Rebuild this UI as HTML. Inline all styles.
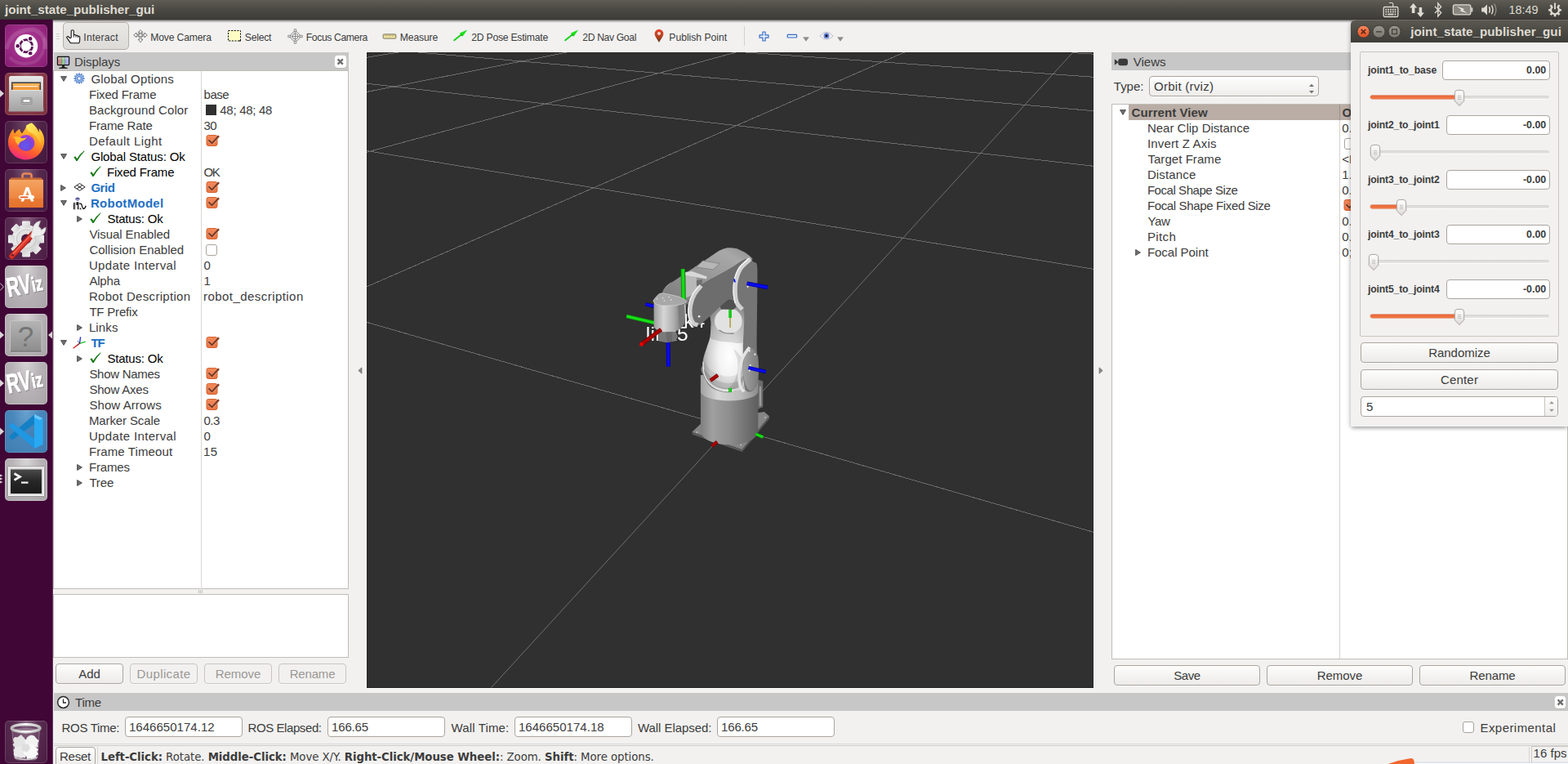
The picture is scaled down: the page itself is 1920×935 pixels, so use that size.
<!DOCTYPE html>
<html lang="en">
<head>
<meta charset="utf-8">
<title>joint_state_publisher_gui</title>
<style>
*{box-sizing:border-box;margin:0;padding:0}
html,body{width:1920px;height:935px;overflow:hidden}
body{position:relative;background:#f2f1f0;font-family:"Liberation Sans",sans-serif;font-size:15px;color:#3c3c3c;-webkit-font-smoothing:antialiased}
.abs{position:absolute}
.t{position:absolute;white-space:nowrap;line-height:1}
/* top panel */
#panel{position:absolute;left:0;top:0;width:1920px;height:24px;background:linear-gradient(#5e5c54 0%,#4b4a44 45%,#3e3d39 96%,#302f2c 100%);}
#panel .title{position:absolute;left:6px;top:3px;font-weight:bold;font-size:15.2px;color:#dfdbd2;line-height:18px;white-space:nowrap}
/* launcher */
#launcher{position:absolute;left:0;top:24px;width:65px;height:911px;background:#400636;border-right:1px solid #6a3863}
.tile{position:absolute;left:6px;width:52px;height:52px;border-radius:5px;overflow:hidden}
/* generic widgets */
.btn{position:absolute;height:24px;border:1px solid #aba59d;border-radius:4px;background:linear-gradient(#fdfdfc,#ecebe9);text-align:center;line-height:22px;font-size:15px;color:#3c3c3c;white-space:nowrap;box-shadow:0 1px 0 rgba(255,255,255,.6)}
.btn.dis{color:#9a9894;border-color:#c9c5c0;background:#f2f1f0}
.inp{position:absolute;height:24px;border:1px solid #aba59d;border-radius:4px;background:#fff;line-height:22px;font-size:15px;color:#3c3c3c;white-space:nowrap;padding-left:4px}
.hdr{position:absolute;height:22px;background:#c7c7c7}
.hdr .t{top:3px;font-size:15px;line-height:17px;color:#3c3c3c}
.closeb{position:absolute;width:13.400px;height:15px;border-radius:3.500px;background:#fefefe;box-shadow:0 0.600px 0.500px #aaa49c,0 0 0 0.400px #d9d9d9}
.tree{position:absolute;background:#fff;border:1px solid #c0bdb7}
.row{position:absolute;left:0;height:19px;line-height:19px;white-space:nowrap;font-size:15px;color:#3c3c3c}
.row.b{font-weight:bold}
.blue{color:#1e6fc4;font-weight:bold}
.blk{color:#000}
.cb{position:absolute;width:14px;height:14px;border:1px solid #a9a39b;border-radius:3px;background:#fff}
.cb.on{background:linear-gradient(#f39668,#ea7442);border-color:#c4633a}
</style>
</head>
<body>
<svg width="0" height="0" style="position:absolute;left:0;top:0" aria-hidden="true"><defs><linearGradient id="cbg" x1="0" y1="0" x2="0" y2="1"><stop offset="0" stop-color="#f28a5c"/><stop offset="1" stop-color="#ea7340"/></linearGradient></defs></svg>
<!-- ===== Unity top panel ===== -->
<div id="panel">
  <div class="title" style="letter-spacing:-0.032px;">joint_state_publisher_gui</div>
  <!-- keyboard indicator -->
  <svg class="abs" style="left:1692px;top:1px" width="22" height="22" viewBox="0 0 22 22">
    <path d="M9 2.5h3.2a1.5 1.5 0 0 1 1.5 1.5v3" fill="none" stroke="#dfdbd2" stroke-width="1.1"/>
    <rect x="2.2" y="7.5" width="17.6" height="12" rx="1.6" fill="none" stroke="#dfdbd2" stroke-width="1.3"/>
    <g fill="#dfdbd2"><rect x="4.4" y="9.8" width="1.8" height="1.8"/><rect x="7.2" y="9.8" width="1.8" height="1.8"/><rect x="10" y="9.8" width="1.8" height="1.8"/><rect x="12.8" y="9.8" width="1.8" height="1.8"/><rect x="15.6" y="9.8" width="1.8" height="1.8"/>
    <rect x="4.4" y="12.6" width="1.8" height="1.8"/><rect x="7.2" y="12.6" width="1.8" height="1.8"/><rect x="10" y="12.6" width="1.8" height="1.8"/><rect x="12.8" y="12.6" width="1.8" height="1.8"/><rect x="15.6" y="12.6" width="1.8" height="1.8"/>
    <rect x="4.4" y="15.6" width="1.8" height="1.8"/><rect x="7.2" y="15.6" width="7.4" height="1.8"/><rect x="15.6" y="15.6" width="1.8" height="1.8"/></g>
  </svg>
  <!-- network -->
  <svg class="abs" style="left:1725px;top:2px" width="20" height="20" viewBox="0 0 20 20">
    <path d="M5.6 2 L10.2 7.6 H7.4 V14 H3.8 V7.6 H1 Z" fill="#dfdbd2"/>
    <path d="M14.4 19 L9.8 13.4 H12.6 V7 H16.2 V13.4 H19 Z" fill="#dfdbd2"/>
  </svg>
  <!-- bluetooth -->
  <svg class="abs" style="left:1755px;top:2px" width="12" height="20" viewBox="0 0 12 20">
    <path d="M2 6 L9.6 13.6 L5.8 18 V2 L9.6 6.4 L2 14" fill="none" stroke="#dfdbd2" stroke-width="1.4" stroke-linejoin="miter"/>
  </svg>
  <!-- battery -->
  <svg class="abs" style="left:1778px;top:4px" width="26" height="16" viewBox="0 0 26 16">
    <rect x="1.400" y="1.900" width="21.400" height="12" rx="2.200" fill="#8a877f" stroke="#dfdbd2" stroke-width="1.300"/>
    <path d="M23.400 5.200 H24.400 Q25.300 5.200 25.300 6.100 V9.700 Q25.300 10.600 24.400 10.600 H23.400 Z" fill="#dfdbd2"/>
    <path d="M5.800 3.800 L15 7 L13 8.200 L19 12.200 L9.600 9.200 L11.800 7.900 Z" fill="#f0ede6"/>
  </svg>
  <!-- volume -->
  <svg class="abs" style="left:1813px;top:3px" width="22" height="18" viewBox="0 0 22 18">
    <path d="M1.2 6.6 H4 L8 2.6 V15.4 L4 11.4 H1.2 Z" fill="#dfdbd2"/>
    <path d="M10.4 5.4 Q12.4 9 10.4 12.6" fill="none" stroke="#dfdbd2" stroke-width="1.5"/>
    <path d="M13.4 3.6 Q16.6 9 13.4 14.4" fill="none" stroke="#dfdbd2" stroke-width="1.5"/>
    <path d="M16.6 1.6 Q21.2 9 16.6 16.4" fill="none" stroke="#8f8c84" stroke-width="1.4"/>
  </svg>
  <div class="t" style="left:1848px;top:4px;font-size:14.400px;line-height:16px;color:#dfdbd2;letter-spacing:-0.003px;margin-left:-0.5px;">18:49</div>
  <!-- power cog -->
  <svg class="abs" style="left:1895px;top:3px" width="18" height="18" viewBox="0 0 18 18">
    <g fill="none" stroke="#dfdbd2">
      <path d="M6.300 5.100 A5 5 0 1 0 11.700 5.100" stroke-width="2.300"/>
      <path d="M9 0.600 V8.200" stroke-width="1.900"/>
      <g stroke-width="2.600"><path d="M12.800 5 L14.600 3.400"/><path d="M5.200 5 L3.400 3.400"/><path d="M14.300 9.300 H16.900"/><path d="M3.700 9.300 H1.100"/><path d="M12.700 13.200 L14.500 15"/><path d="M5.300 13.200 L3.500 15"/><path d="M9 14.700 V17.300"/></g>
    </g>
  </svg>
</div>
<!-- ===== Unity launcher ===== -->
<div id="launcher">
  <!-- dash -->
  <div class="tile" style="top:6px;background:radial-gradient(circle at 50% 45%,#b8489f 0%,#9a2a84 55%,#861c70 100%);box-shadow:inset 0 0 0 1px rgba(255,255,255,.12)">
    <svg width="52" height="52" viewBox="0 0 52 52">
      <path d="M2 30 Q8 6 34 6 Q50 10 50 30" fill="none" stroke="rgba(255,255,255,.13)" stroke-width="5"/>
      <path d="M6 40 Q16 52 36 46 Q50 38 48 16" fill="none" stroke="rgba(255,255,255,.10)" stroke-width="4"/>
      <circle cx="26" cy="26.300" r="14.200" fill="#fff"/>
      <circle cx="26" cy="26.300" r="7.600" fill="none" stroke="#5e1455" stroke-width="2.800"/>
      <path d="M23.75 22.40 L21.00 17.64" stroke="#fff" stroke-width="1.300"/>
      <path d="M30.50 26.30 L36.00 26.30" stroke="#fff" stroke-width="1.300"/>
      <path d="M23.75 30.20 L21.00 34.96" stroke="#fff" stroke-width="1.300"/>
      <circle cx="15.70" cy="26.30" r="3.400" fill="#fff"/>
      <circle cx="15.70" cy="26.30" r="2.300" fill="#5e1455"/>
      <circle cx="31.15" cy="17.38" r="3.400" fill="#fff"/>
      <circle cx="31.15" cy="17.38" r="2.300" fill="#5e1455"/>
      <circle cx="31.15" cy="35.22" r="3.400" fill="#fff"/>
      <circle cx="31.15" cy="35.22" r="2.300" fill="#5e1455"/>
    </svg>
  </div>
  <!-- files -->
  <div class="tile" style="top:65px;background:radial-gradient(ellipse at 50% 0%,#a3616a 0%,#8a3c49 45%,#7d303e 100%);box-shadow:inset 0 0 0 1px rgba(255,255,255,.14)">
    <svg width="52" height="52" viewBox="0 0 52 52">
      <defs><linearGradient id="fc1" x1="0" y1="0" x2="0" y2="1"><stop offset="0" stop-color="#e9e9e9"/><stop offset="1" stop-color="#a9a9a9"/></linearGradient>
      <linearGradient id="fc2" x1="0" y1="0" x2="0" y2="1"><stop offset="0" stop-color="#c9c9c9"/><stop offset="1" stop-color="#a2a2a2"/></linearGradient></defs>
      <path d="M5 6.500 Q5 4 7.500 4 H44.500 Q47 4 47 6.500 V46.500 H5 Z" fill="url(#fc1)"/>
      <rect x="8" y="11.500" width="36" height="11" fill="#3a3a3a"/>
      <rect x="9.500" y="13" width="33" height="8" fill="#f39a3c"/>
      <rect x="9.500" y="13" width="33" height="2.200" fill="#f7b65a"/>
      <rect x="10.500" y="16" width="30" height="1.300" fill="#fff6e0"/>
      <path d="M6.500 21.500 H45.500 L47.500 47.500 H4.500 Z" fill="url(#fc2)"/>
      <path d="M7.500 21.500 H44.500" stroke="#e4e4e4" stroke-width="1"/>
      <rect x="20" y="30.500" width="13" height="8" rx="1.500" fill="#b5b5b5" stroke="#8d8d8d" stroke-width="0.800"/>
      <rect x="22" y="32.300" width="9" height="4" fill="#f4f4f4" stroke="#6a6a6a" stroke-width="0.700"/>
    </svg>
  </div>
  <!-- firefox -->
  <div class="tile" style="top:124px;background:radial-gradient(ellipse at 50% 0%,#6d4566 0%,#4f2348 50%,#45183e 100%);box-shadow:inset 0 0 0 1px rgba(255,255,255,.14)">
    <svg width="52" height="52" viewBox="0 0 52 52">
      <defs>
        <linearGradient id="ff1" x1="0.700" y1="0" x2="0.250" y2="1"><stop offset="0" stop-color="#ffe14a"/><stop offset="0.350" stop-color="#ffa426"/><stop offset="0.700" stop-color="#ff5a2e"/><stop offset="1" stop-color="#f0218f"/></linearGradient>
        <radialGradient id="ff2" cx="0.450" cy="0.650" r="0.650"><stop offset="0" stop-color="#5c5bf0"/><stop offset="0.600" stop-color="#7a43d8"/><stop offset="1" stop-color="#b23bd0"/></radialGradient>
        <linearGradient id="ff3" x1="0" y1="0" x2="1" y2="1"><stop offset="0" stop-color="#fff36b"/><stop offset="1" stop-color="#ffb52e"/></linearGradient>
      </defs>
      <path d="M33 2.500 C37 6 40 10 41.500 14 C42 12 42 10.500 41.500 9 C47 14 49 21 48 28 C46.500 39 37 47.500 26 47.500 C13.500 47.500 4 38 4 26.500 C4 19 7 13.500 10.500 9.500 C10.500 12 11 14 12 15.500 C13.500 13 15.500 11 18 10 C18.500 12 19.500 14 21 15.500 C23 12 26 9.500 26 6 C28 4 31 3 33 2.500 Z" fill="url(#ff1)"/>
      <path d="M33 2.500 C37 6 40 10 41.500 14 C44 19 45 24 43.500 29 C42 22 38 17 32 14 C28 12 26 9.500 26 6 C28 4 31 3 33 2.500 Z" fill="url(#ff3)"/>
      <ellipse cx="26" cy="27" rx="10.500" ry="10" fill="url(#ff2)"/>
      <path d="M9.500 20 C13 18.500 17 19 20.500 21 C23 21.500 25 21 26.500 20 C25.500 22.500 23.500 24 21 24.500 C18.500 25.500 17 27.500 17 30 C14 27.500 12.500 24.500 12.500 22 C11.500 21 10.500 20.500 9.500 20 Z" fill="#ffbd2f"/>
      <path d="M28.500 15 C32 15.500 35 18 36 21 C34.500 20 33 19.500 31.500 19.500 C31 17.500 30 16 28.500 15 Z" fill="#ff8a2a" opacity=".9"/>
    </svg>
  </div>
  <!-- software center -->
  <div class="tile" style="top:183px;background:radial-gradient(ellipse at 50% 0%,#7a5674 0%,#55294e 45%,#481a41 100%);box-shadow:inset 0 0 0 1px rgba(255,255,255,.14)">
    <svg width="52" height="52" viewBox="0 0 52 52">
      <defs><linearGradient id="sw1" x1="0" y1="0" x2="0" y2="1"><stop offset="0" stop-color="#f4a463"/><stop offset="0.550" stop-color="#ef8a45"/><stop offset="1" stop-color="#e6742f"/></linearGradient></defs>
      <path d="M21.500 17 V8 Q21.500 5.500 24 5.500 H30 Q32.500 5.500 32.500 8 V17" fill="none" stroke="#e98856" stroke-width="2.600"/>
      <path d="M5 13.500 L7.500 10.500 H44.500 L47 13.500 Z" fill="#c86a35"/>
      <rect x="5" y="13" width="42" height="34" fill="url(#sw1)"/>
      <rect x="5" y="36" width="42" height="11" fill="#e56f2a" opacity=".5"/>
      <path d="M25.800 22 H29.200 L35.500 39.500 H32 L27.500 26.500 L23 39.500 H19.500 Z" fill="#fff"/>
      <rect x="17" y="32" width="19" height="4.600" rx="2.300" fill="#fff"/>
      <rect x="18.500" y="33.400" width="10" height="1.800" rx="0.900" fill="#e8521c"/>
    </svg>
  </div>
  <!-- system settings -->
  <div class="tile" style="top:242px;background:radial-gradient(ellipse at 50% 0%,#86607f 0%,#5a2c52 45%,#4b1c43 100%);box-shadow:inset 0 0 0 1px rgba(255,255,255,.14)">
    <svg width="52" height="52" viewBox="0 0 52 52">
      <defs><linearGradient id="st1" x1="0" y1="0" x2="1" y2="1"><stop offset="0" stop-color="#f4f4f4"/><stop offset="1" stop-color="#cfcfcf"/></linearGradient></defs>
      <g transform="translate(26 26.500)">
        <g fill="url(#st1)">
          <circle r="17.500"/>
          <rect x="-5" y="-22" width="10" height="8" rx="1.200" transform="rotate(0)"/>
          <rect x="-5" y="-22" width="10" height="8" rx="1.200" transform="rotate(45)"/>
          <rect x="-5" y="-22" width="10" height="8" rx="1.200" transform="rotate(90)"/>
          <rect x="-5" y="-22" width="10" height="8" rx="1.200" transform="rotate(135)"/>
          <rect x="-5" y="-22" width="10" height="8" rx="1.200" transform="rotate(180)"/>
          <rect x="-5" y="-22" width="10" height="8" rx="1.200" transform="rotate(225)"/>
          <rect x="-5" y="-22" width="10" height="8" rx="1.200" transform="rotate(270)"/>
          <rect x="-5" y="-22" width="10" height="8" rx="1.200" transform="rotate(315)"/>
        </g>
        <circle r="11.500" fill="#e2e2e2" stroke="#c9c9c9" stroke-width="1.200"/>
        <circle r="6" fill="#4b1c43"/>
      </g>
      <path d="M8.500 47.500 L34 20.500" stroke="#b01f18" stroke-width="7" stroke-linecap="round"/>
      <path d="M8.500 47.500 L34 20.500" stroke="#e0382c" stroke-width="4.600" stroke-linecap="round"/>
      <path d="M9.500 45 L33 20" stroke="#f07a6a" stroke-width="1.200" stroke-linecap="round" opacity=".8"/>
      <circle cx="9.500" cy="46.300" r="1.500" fill="#6a1d2e"/>
      <path d="M31.500 23.500 L35.500 10 Q38 5 43.500 4.500 L41 11.500 L44.500 15.500 L50 12 Q50.500 18 46 21.500 Q42 24 37.500 23 L34.500 26.500 Z" fill="#ededed" stroke="#bdbdbd" stroke-width="0.700"/>
    </svg>
  </div>
  <!-- rviz -->
  <div class="tile" style="top:301px;background:radial-gradient(ellipse at 50% 0%,#d6d3d5 0%,#b7b3b6 45%,#a9a4a8 100%);box-shadow:inset 0 0 0 1px rgba(255,255,255,.25)">
    <svg width="52" height="52" viewBox="0 0 52 52">
      <defs><filter id="fNoL" x="-10%" y="-10%" width="120%" height="120%"><feOffset dx="0" dy="0"/></filter></defs>
      <g font-family="'Liberation Sans',sans-serif" font-weight="bold" filter="url(#fNoL)">
        <g transform="translate(5.500 39.500) rotate(-11) scale(0.660 1)"><text x="0" y="0" font-size="33" fill="#8a8689" stroke="#8a8689" stroke-width="0.800">RV</text></g>
        <g transform="translate(35.300 33.300) rotate(-11) scale(0.700 1)"><text x="0" y="0" font-size="25" fill="#8a8689" stroke="#8a8689" stroke-width="0.800">iz</text></g>
        <g transform="translate(4.500 38.500) rotate(-11) scale(0.660 1)"><text x="0" y="0" font-size="33" fill="#ffffff" stroke="#ffffff" stroke-width="0.800">RV</text></g>
        <g transform="translate(34.300 32.300) rotate(-11) scale(0.700 1)"><text x="0" y="0" font-size="25" fill="#ffffff" stroke="#ffffff" stroke-width="0.800">iz</text></g>
      </g>
    </svg>
  </div>
  <!-- help -->
  <div class="tile" style="top:360px;background:radial-gradient(ellipse at 50% 0%,#d6d3d5 0%,#b7b3b6 45%,#a9a4a8 100%);box-shadow:inset 0 0 0 1px rgba(255,255,255,.25)">
    <svg width="52" height="52" viewBox="0 0 52 52">
      <defs><linearGradient id="hp1" x1="0" y1="0" x2="0" y2="1"><stop offset="0" stop-color="#b4b4b4"/><stop offset="1" stop-color="#8c8c8c"/></linearGradient></defs>
      <rect x="6.500" y="8.500" width="38.500" height="38.500" rx="2" fill="url(#hp1)" stroke="#c9c9c9" stroke-width="0.800"/>
      <path d="M6.500 46 H45" stroke="#6f6f6f" stroke-width="1.200"/>
      <text x="25.600" y="40" font-family="'Liberation Sans',sans-serif" font-size="35" fill="#747474" text-anchor="middle">?</text>
    </svg>
  </div>
  <!-- rviz 2 -->
  <div class="tile" style="top:419px;background:radial-gradient(ellipse at 50% 0%,#d6d3d5 0%,#b7b3b6 45%,#a9a4a8 100%);box-shadow:inset 0 0 0 1px rgba(255,255,255,.25)">
    <svg width="52" height="52" viewBox="0 0 52 52">
      <g font-family="'Liberation Sans',sans-serif" font-weight="bold" filter="url(#fNoL)">
        <g transform="translate(5.500 39.500) rotate(-11) scale(0.660 1)"><text x="0" y="0" font-size="33" fill="#8a8689" stroke="#8a8689" stroke-width="0.800">RV</text></g>
        <g transform="translate(35.300 33.300) rotate(-11) scale(0.700 1)"><text x="0" y="0" font-size="25" fill="#8a8689" stroke="#8a8689" stroke-width="0.800">iz</text></g>
        <g transform="translate(4.500 38.500) rotate(-11) scale(0.660 1)"><text x="0" y="0" font-size="33" fill="#ffffff" stroke="#ffffff" stroke-width="0.800">RV</text></g>
        <g transform="translate(34.300 32.300) rotate(-11) scale(0.700 1)"><text x="0" y="0" font-size="25" fill="#ffffff" stroke="#ffffff" stroke-width="0.800">iz</text></g>
      </g>
    </svg>
  </div>
  <!-- vscode -->
  <div class="tile" style="top:478px;background:radial-gradient(ellipse at 50% 0%,#6aa2cf 0%,#4a87bb 45%,#3f7cb0 100%);box-shadow:inset 0 0 0 1px rgba(255,255,255,.14)">
    <svg width="52" height="52" viewBox="0 0 52 52">
      <path d="M36 5 L46.500 10 V42 L36 47 Z" fill="#29a9f2"/>
      <path d="M36 5 L46.500 10 L42.500 12 L36 9 Z" fill="#6cc8fb"/>
      <path d="M36 5.500 L36 17 L9 36.500 L5.500 33.500 Q4.600 32.500 5.500 31.500 Z" fill="#1480c6"/>
      <path d="M36 46.500 L36 35 L9 15.500 L5.500 18.500 Q4.600 19.500 5.500 20.500 Z" fill="#1f97e3"/>
      <path d="M36 17 V35 L24 26 Z" fill="#3f7cb0" opacity=".55"/>
    </svg>
  </div>
  <!-- terminal -->
  <div class="tile" style="top:537px;background:radial-gradient(ellipse at 50% 0%,#d9d6d8 0%,#b9b5b8 45%,#aaa5a9 100%);box-shadow:inset 0 0 0 1px rgba(255,255,255,.25)">
    <svg width="52" height="52" viewBox="0 0 52 52">
      <defs><linearGradient id="tm1" x1="0" y1="0" x2="0" y2="1"><stop offset="0" stop-color="#4a4a4a"/><stop offset="0.500" stop-color="#262626"/><stop offset="1" stop-color="#1a1a1a"/></linearGradient></defs>
      <rect x="3.500" y="10" width="45" height="36.500" rx="1.500" fill="#d9d9d9" stroke="#8a8a8a" stroke-width="0.800"/>
      <rect x="4.500" y="11" width="43" height="34.500" fill="none" stroke="#fff" stroke-width="1"/>
      <rect x="7" y="13.500" width="38" height="29.500" fill="url(#tm1)"/>
      <path d="M11.500 18.500 L18.500 22.500 L11.500 26.500" fill="none" stroke="#f2f2f2" stroke-width="2.600"/>
      <rect x="20" y="28.500" width="8.500" height="2.200" fill="#f2f2f2"/>
    </svg>
  </div>
  <!-- trash -->
  <div class="tile" style="top:858px;background:radial-gradient(ellipse at 50% 0%,#8a6a84 0%,#5a2f53 38%,#4a1c43 100%);box-shadow:inset 0 0 0 1px rgba(255,255,255,.16)">
    <svg width="52" height="52" viewBox="0 0 52 52">
      <defs><linearGradient id="tr1" x1="0" y1="0" x2="1" y2="0"><stop offset="0" stop-color="#bdbdbd"/><stop offset="0.500" stop-color="#ffffff"/><stop offset="1" stop-color="#bdbdbd"/></linearGradient></defs>
      <path d="M8.600 10 L11.700 45 Q12.200 47.600 16 48 H35.500 Q39.300 47.600 39.800 45 L42.600 10 Z" fill="rgba(255,255,255,.13)" stroke="rgba(255,255,255,.38)" stroke-width="0.800"/>
      <path d="M27.4 27.0 L25.4 29.0 L25.4 31.4 L23.0 32.2 L22.0 34.7 L19.6 34.9 L17.1 36.4 L15.0 34.8 L12.3 34.2 L11.6 31.5 L9.4 29.7 L11.5 27.0 L10.2 24.6 L10.3 21.7 L12.4 19.9 L15.4 20.2 L17.3 18.9 L19.9 16.9 L22.0 19.4 L23.8 20.9 L24.8 23.0 L25.0 25.1 Z" fill="#e4e4e4"/>
      <path d="M40.5 27.0 L40.2 29.3 L40.6 32.3 L37.3 32.7 L36.3 35.6 L33.9 37.1 L31.1 36.7 L28.7 35.5 L26.9 33.6 L25.5 31.6 L24.2 29.5 L25.4 27.0 L23.1 24.2 L26.1 22.8 L27.0 20.5 L29.0 19.1 L31.2 17.7 L33.8 17.8 L36.2 18.7 L37.8 20.8 L39.3 22.5 L41.7 24.2 Z" fill="#f2f2f2"/>
      <path d="M27.5 38.5 L26.9 40.8 L25.7 42.8 L25.1 45.5 L22.1 45.3 L20.0 45.7 L18.0 45.4 L16.2 44.6 L13.6 44.7 L11.5 43.3 L10.6 41.0 L11.0 38.5 L10.4 36.0 L11.8 33.9 L14.1 32.9 L15.6 31.0 L18.0 31.4 L20.0 31.2 L22.2 31.6 L24.5 32.2 L25.6 34.3 L26.5 36.3 Z" fill="#eaeaea"/>
      <path d="M39.2 38.0 L41.3 40.9 L38.7 42.6 L37.5 44.9 L35.4 46.6 L32.8 47.2 L30.3 46.1 L27.2 47.4 L26.4 43.9 L25.0 42.2 L23.1 40.5 L22.4 38.0 L22.3 35.3 L24.5 33.5 L25.4 31.0 L28.6 31.6 L30.1 28.6 L32.9 28.6 L35.4 29.5 L36.4 32.3 L38.9 33.3 L41.0 35.2 Z" fill="#f8f8f8"/>
      <path d="M31.1 33.0 L29.9 35.1 L28.6 36.9 L26.8 38.7 L24.5 37.5 L21.9 37.5 L20.7 35.3 L20.7 33.0 L20.8 30.7 L21.9 28.4 L24.5 28.7 L26.4 28.9 L28.9 28.8 L29.5 31.1 Z" fill="#dedede"/>
      <path d="M12 44 Q25.500 49.500 39.500 44 L39.300 46 Q25.500 50.500 12.200 46 Z" fill="#cfcfcf"/>
      <ellipse cx="25.600" cy="9.200" rx="17.400" ry="4.600" fill="none" stroke="url(#tr1)" stroke-width="3.400"/>
      <ellipse cx="25.600" cy="10.400" rx="17" ry="4.600" fill="none" stroke="#a9a9a9" stroke-width="0.800" opacity=".7"/>
    </svg>
  </div>
  <!-- running / active pips -->
  <svg class="abs" style="left:0;top:0" width="65" height="911" viewBox="0 0 65 911">
    <path d="M0 86 L5 90.500 L0 95 Z" fill="#d9d3d7"/>
    <path d="M0.200 322.500 L4.400 327 L0.200 331.500" fill="none" stroke="#d9d3d7" stroke-width="1"/>
    <path d="M0 381.500 L5 386 L0 390.500 Z" fill="#d9d3d7"/>
    <path d="M64 381.500 L59 386 L64 390.500 Z" fill="#d9d3d7"/>
    <path d="M0 440.500 L5 445 L0 449.500 Z" fill="#d9d3d7"/>
    <path d="M0 499.500 L5 504 L0 508.500 Z" fill="#d9d3d7"/>
    <path d="M0 556.600 L3.500 558 L0 559.400 Z M0 560.600 L3.500 562 L0 563.400 Z M0 564.600 L3.500 566 L0 567.400 Z" fill="#d9d3d7"/>
  </svg>
</div>
<!-- ===== RViz toolbar ===== -->
<div class="abs" style="left:65px;top:24px;width:1855px;height:4px;background:linear-gradient(rgba(40,38,34,.75),rgba(60,58,54,.25) 55%,rgba(242,241,240,0))"></div>
<div id="toolbar" class="abs" style="left:65px;top:24px;width:1590px;height:40px;font-size:12.2px;color:#3c3c3c">
  <!-- grip -->
  <div class="abs" style="left:4px;top:17px;width:4px;height:1px;background:#cfccc7;box-shadow:0 3px 0 #cfccc7,0 6px 0 #cfccc7"></div>
  <!-- Interact (checked) -->
  <div class="abs" style="left:12px;top:3px;width:81px;height:34px;border:1px solid #b4afa8;border-radius:5px;background:linear-gradient(#ebe9e6,#e2e0dd 60%,#dddbd8)"></div>
  <svg class="abs" style="left:16px;top:12px" width="18" height="18" viewBox="0 0 18 18">
    <path d="M6.200 10 V2.100 Q6.200 0.700 7.700 0.700 Q9.300 0.700 9.300 2.100 V6.700 Q10.400 6.200 11.400 6.700 Q12 7.100 12 7.600 Q12.900 7 13.800 7.400 Q14.500 7.800 14.500 8.400 Q15.300 8 16.100 8.400 Q16.700 8.900 16.700 9.900 V13 Q16.700 15.200 15.700 16.700 H5.500 Q4 14.800 2.700 12.900 L0.900 10.300 Q0.400 9.100 1.400 8.700 Q2.600 8.400 3.400 9.300 L4.600 10.700 Z" fill="#fff" stroke="#111" stroke-width="1.100" stroke-linejoin="round"/>
    <path d="M9.300 6.700 V9.600 M12 7.600 V9.800 M14.500 8.400 V10.200" stroke="#111" stroke-width="0.900" fill="none"/>
  </svg>
  <div class="t" style="left:37.8px;top:14.600px;line-height:15px;letter-spacing:0.233px;margin-left:-0.5px;">Interact</div>
  <!-- Move Camera -->
  <svg class="abs" style="left:98px;top:12px" width="18" height="17" viewBox="0 0 18 17">
    <g fill="#f6f6f6" stroke="#4a4a4a" stroke-width="0.700" stroke-linejoin="round">
      <path d="M9 0.600 L11.800 3.600 H10 V6 H14 V4.200 L17.300 7 L14 9.800 V8 H10 V12.200 H11.800 L9 15.800 L6.200 12.200 H8 V8 H4 V9.800 L0.700 7 L4 4.200 V6 H8 V3.600 H6.200 Z"/>
    </g>
    <ellipse cx="9" cy="7" rx="3.400" ry="2" fill="none" stroke="#666" stroke-width="0.700"/>
  </svg>
  <div class="t" style="left:119.8px;top:14.600px;line-height:15px;letter-spacing:-0.187px;margin-left:-0.5px;">Move Camera</div>
  <!-- Select -->
  <svg class="abs" style="left:213px;top:12px" width="18" height="16" viewBox="0 0 18 16">
    <rect x="1.500" y="1.500" width="15" height="12.500" fill="#fdfcc4" stroke="#111" stroke-width="1" stroke-dasharray="2.200 1.400"/>
    <path d="M16.800 12 V14.500 H14.300 Z" fill="#111"/>
  </svg>
  <div class="t" style="left:234.8px;top:14.600px;line-height:15px;letter-spacing:-0.248px;">Select</div>
  <!-- Focus Camera -->
  <svg class="abs" style="left:287px;top:11px" width="19" height="19" viewBox="0 0 19 19">
    <g fill="#f0f0f0" stroke="#707070" stroke-width="0.750">
      <path d="M8.300 0.800 H10.700 V4 H8.300 Z M8.300 15 H10.700 V18.200 H8.300 Z M0.800 8.300 H4 V10.700 H0.800 Z M15 8.300 H18.200 V10.700 H15 Z"/>
      <circle cx="9.500" cy="9.500" r="5.600"/>
    </g>
    <circle cx="9.500" cy="9.500" r="3.400" fill="#f4f4f4" stroke="#777" stroke-width="0.800"/>
    <path d="M9.500 5 V14 M5 9.500 H14" stroke="#777" stroke-width="0.800"/>
  </svg>
  <div class="t" style="left:310.3px;top:14.600px;line-height:15px;letter-spacing:-0.395px;margin-left:-0.5px;">Focus Camera</div>
  <!-- Measure -->
  <svg class="abs" style="left:403px;top:16.500px" width="18" height="8" viewBox="0 0 18 8">
    <rect x="1.200" y="0.900" width="15.600" height="5.200" rx="0.800" fill="#efe2a0" stroke="#7c7559" stroke-width="1"/>
    <path d="M4 1.500 V3.400 M6.200 1.500 V3 M8.400 1.500 V3.400 M10.600 1.500 V3 M12.800 1.500 V3.400 M15 1.500 V3" stroke="#7c7559" stroke-width="0.700"/>
  </svg>
  <div class="t" style="left:425.3px;top:14.600px;line-height:15px;letter-spacing:-0.174px;margin-left:-0.5px;">Measure</div>
  <!-- 2D Pose Estimate -->
  <svg class="abs" style="left:490px;top:12px" width="18" height="15" viewBox="0 0 18 15">
    <path d="M1.200 13.300 L10 6.300" stroke="#19d219" stroke-width="2" stroke-linecap="round"/>
    <path d="M17.200 0.400 L11.600 8.400 L8 4.600 Z" fill="#14e314"/>
    <path d="M8 4.600 L11.600 8.400 L9.700 7.300 Z" fill="#0b6e0b"/>
  </svg>
  <div class="t" style="left:512.3px;top:14.600px;line-height:15px;letter-spacing:-0.245px;">2D Pose Estimate</div>
  <!-- 2D Nav Goal -->
  <svg class="abs" style="left:626px;top:12px" width="18" height="15" viewBox="0 0 18 15">
    <path d="M1.200 13.300 L10 6.300" stroke="#19d219" stroke-width="2" stroke-linecap="round"/>
    <path d="M17.200 0.400 L11.600 8.400 L8 4.600 Z" fill="#14e314"/>
    <path d="M8 4.600 L11.600 8.400 L9.700 7.300 Z" fill="#0b6e0b"/>
  </svg>
  <div class="t" style="left:648.3px;top:14.600px;line-height:15px;letter-spacing:-0.367px;">2D Nav Goal</div>
  <!-- Publish Point -->
  <svg class="abs" style="left:735px;top:11px" width="14" height="18" viewBox="0 0 14 18">
    <defs><linearGradient id="pp1" x1="0" y1="0" x2="0" y2="1"><stop offset="0" stop-color="#e8442a"/><stop offset="0.550" stop-color="#b5421f"/><stop offset="1" stop-color="#5a3317"/></linearGradient></defs>
    <path d="M7 17 C5.500 13.500 1.600 9.800 1.600 6.200 A5.400 5.400 0 0 1 12.400 6.200 C12.400 9.800 8.500 13.500 7 17 Z" fill="url(#pp1)"/>
    <circle cx="7" cy="6" r="2" fill="#f6ddd6"/>
  </svg>
  <div class="t" style="left:754.8px;top:14.600px;line-height:15px;letter-spacing:-0.021px;margin-left:-0.5px;">Publish Point</div>
  <div class="abs" style="left:846px;top:8px;width:1px;height:24px;background:#d3d0cb"></div>
  <!-- plus -->
  <svg class="abs" style="left:863.500px;top:13.500px" width="13" height="13" viewBox="0 0 13 13">
    <path d="M4.900 1 H8.100 V4.900 H12 V8.100 H8.100 V12 H4.900 V8.100 H1 V4.900 H4.900 Z" fill="#e4edfb" stroke="#3d6fc0" stroke-width="1.200" stroke-linejoin="round"/>
  </svg>
  <!-- minus -->
  <svg class="abs" style="left:898px;top:17px" width="14" height="7" viewBox="0 0 14 7">
    <rect x="1.200" y="1.400" width="11.400" height="3.600" rx="0.800" fill="#e4edfb" stroke="#3d6fc0" stroke-width="1.200"/>
  </svg>
  <svg class="abs" style="left:918px;top:21px" width="8" height="6" viewBox="0 0 8 6"><path d="M0.700 0.700 H7.300 L4 5.200 Z" fill="#8e8e8e" stroke="#777" stroke-width="0.500"/></svg>
  <!-- eye -->
  <svg class="abs" style="left:938px;top:14px" width="18" height="12" viewBox="0 0 18 12">
    <path d="M0.800 6 Q9 -3.400 17.200 6 Q9 14.600 0.800 6 Z" fill="#f2f2f6" stroke="#b9b9c4" stroke-width="0.900"/>
    <circle cx="9" cy="5.800" r="3.500" fill="#6a86d2"/>
    <circle cx="9" cy="5.800" r="1.500" fill="#0b0b20"/>
  </svg>
  <svg class="abs" style="left:960px;top:21px" width="8" height="6" viewBox="0 0 8 6"><path d="M0.700 0.700 H7.300 L4 5.200 Z" fill="#8e8e8e" stroke="#777" stroke-width="0.500"/></svg>
</div>
<!-- ===== Displays panel ===== -->
<div class="hdr" style="left:66px;top:64px;width:361px;height:22px">
  <svg class="abs" style="left:3px;top:4px" width="17" height="17" viewBox="0 0 17 17"><rect x="0.800" y="0.800" width="15.400" height="11.400" rx="1.400" fill="#111"/><rect x="2" y="2" width="4.400" height="9" fill="#c98a8a"/><rect x="6.400" y="2" width="4.300" height="9" fill="#8fca8f"/><rect x="10.700" y="2" width="4.300" height="9" fill="#ababf0"/><rect x="2" y="2" width="13" height="3" fill="#fff" opacity=".18"/><rect x="7" y="12.200" width="3" height="2" fill="#111"/><path d="M3.500 15.400 Q8.500 13.400 13.500 15.400 Z" fill="#111" stroke="#111" stroke-width="0.800"/></svg>
  <div class="t" style="left:25.500px;top:3px;letter-spacing:-0.055px;margin-left:-0.5px;">Displays</div>
  <div class="closeb" style="left:344.200px;top:3.700px"><svg width="13.4" height="15" viewBox="0 0 13.4 15" style="position:absolute;left:0;top:0"><path d="M3.600 4.400 L9.800 10.600 M9.800 4.400 L3.600 10.600" stroke="#6c6c6c" stroke-width="2.300" stroke-linecap="butt"/></svg></div>
</div>
<div class="tree" style="left:65px;top:86px;width:362px;height:635px">
  <div class="abs" style="left:180px;top:0;width:1px;height:634px;background:#d9d8d5"></div>
  <svg class="abs" style="left:8.4px;top:5.6px" width="8" height="7" viewBox="0 0 8 7"><path d="M0.500 0.600 H7.500 L4 6.400 Z" fill="#707070" stroke="#3a3a3a" stroke-width="0.800" stroke-linejoin="round"/></svg><svg class="abs" style="left:23.5px;top:1.5px" width="14" height="14" viewBox="0 0 14 14"><g transform="translate(7 7)"><g stroke="#4a7ccb" stroke-width="2" stroke-linecap="butt"><path d="M4.20 0.00 L6.50 0.00"/><path d="M3.64 2.10 L5.63 3.25"/><path d="M2.10 3.64 L3.25 5.63"/><path d="M0.00 4.20 L0.00 6.50"/><path d="M-2.10 3.64 L-3.25 5.63"/><path d="M-3.64 2.10 L-5.63 3.25"/><path d="M-4.20 0.00 L-6.50 0.00"/><path d="M-3.64 -2.10 L-5.63 -3.25"/><path d="M-2.10 -3.64 L-3.25 -5.63"/><path d="M-0.00 -4.20 L-0.00 -6.50"/><path d="M2.10 -3.64 L3.25 -5.63"/><path d="M3.64 -2.10 L5.63 -3.25"/></g><g stroke="#b4caec" stroke-width="0.900"><path d="M4.00 0.00 L5.80 0.00"/><path d="M3.46 2.00 L5.02 2.90"/><path d="M2.00 3.46 L2.90 5.02"/><path d="M0.00 4.00 L0.00 5.80"/><path d="M-2.00 3.46 L-2.90 5.02"/><path d="M-3.46 2.00 L-5.02 2.90"/><path d="M-4.00 0.00 L-5.80 0.00"/><path d="M-3.46 -2.00 L-5.02 -2.90"/><path d="M-2.00 -3.46 L-2.90 -5.02"/><path d="M-0.00 -4.00 L-0.00 -5.80"/><path d="M2.00 -3.46 L2.90 -5.02"/><path d="M3.46 -2.00 L5.02 -2.90"/></g><circle r="4.600" fill="#a9c3e8" stroke="#3f73c4" stroke-width="0.800"/><circle r="2.600" fill="#b9cfef" stroke="#4a7dcc" stroke-width="0.900"/><circle r="1.100" fill="#ffffff"/></g></svg><div class="row" style="left:45.4px;top:0px;letter-spacing:0.167px;">Global Options</div>
  <div class="row" style="left:43.4px;top:19px;letter-spacing:-0.155px;margin-left:-0.5px;">Fixed Frame</div><div class="row" style="left:183.5px;top:19px;letter-spacing:-0.463px;">base</div>
  <div class="row" style="left:43.4px;top:38px;letter-spacing:0.088px;margin-left:-0.5px;">Background Color</div><div class="abs" style="left:186px;top:41px;width:13px;height:13px;background:#303030"></div><div class="row" style="left:203.3px;top:38px;letter-spacing:-0.288px;">48; 48; 48</div>
  <div class="row" style="left:43.4px;top:57px;letter-spacing:-0.140px;margin-left:-0.5px;">Frame Rate</div><div class="row" style="left:183.5px;top:57px;letter-spacing:-0.545px;">30</div>
  <div class="row" style="left:43.4px;top:76px;letter-spacing:0.419px;margin-left:-0.5px;">Default Light</div><svg class="abs" style="left:185.5px;top:76.5px" width="17" height="16" viewBox="0 0 17 16"><rect x="1" y="1.500" width="13" height="13" rx="2.200" fill="url(#cbg)" stroke="#d3612f" stroke-width="1"/><path d="M3.300 7.300 L7.500 11.400 L16 2.300" fill="none" stroke="#f6b391" stroke-width="3.400" stroke-linejoin="round" opacity=".75"/><path d="M3.400 7.300 L7.500 11.300 L16 2.300" fill="none" stroke="#7a3a24" stroke-width="2.200" stroke-linejoin="miter"/></svg>
  <svg class="abs" style="left:8.4px;top:100.6px" width="8" height="7" viewBox="0 0 8 7"><path d="M0.500 0.600 H7.500 L4 6.400 Z" fill="#707070" stroke="#3a3a3a" stroke-width="0.800" stroke-linejoin="round"/></svg><svg class="abs" style="left:24.1px;top:97px" width="14" height="14" viewBox="0 0 14 14"><path d="M0.300 8.500 L2.300 7.200 Q3.500 8.600 4.200 10.200 Q8 4 13.100 0.200 L13.500 0.900 Q8.600 6 4.700 13.100 H3.200 Q2.200 10.600 0.300 8.500 Z" fill="#1a7a1a"/></svg><div class="row blk" style="left:45.4px;top:95px;letter-spacing:-0.135px;">Global Status: Ok</div>
  <svg class="abs" style="left:43.7px;top:116px" width="14" height="14" viewBox="0 0 14 14"><path d="M0.300 8.500 L2.300 7.200 Q3.500 8.600 4.200 10.200 Q8 4 13.100 0.200 L13.500 0.900 Q8.600 6 4.700 13.100 H3.200 Q2.200 10.600 0.300 8.500 Z" fill="#1a7a1a"/></svg><div class="row blk" style="left:65.4px;top:114px;letter-spacing:-0.155px;margin-left:-0.5px;">Fixed Frame</div><div class="row" style="left:183.5px;top:114px;letter-spacing:-1.383px;">OK</div>
  <svg class="abs" style="left:8.4px;top:138.5px" width="7" height="8" viewBox="0 0 7 8"><path d="M0.600 0.500 V7.500 L6.400 4 Z" fill="#707070" stroke="#3a3a3a" stroke-width="0.800" stroke-linejoin="round"/></svg><svg class="abs" style="left:23.5px;top:136.5px" width="15" height="10" viewBox="0 0 15 10"><path d="M7.500 0.500 L14.200 4.900 L7.500 9.300 L0.800 4.900 Z M4.150 2.700 L10.850 7.100 M10.850 2.700 L4.150 7.100" fill="#fff" stroke="#222" stroke-width="1" stroke-linejoin="round"/></svg><div class="row blue" style="left:45.4px;top:133px;letter-spacing:-0.460px;">Grid</div><svg class="abs" style="left:185.5px;top:133.5px" width="17" height="16" viewBox="0 0 17 16"><rect x="1" y="1.500" width="13" height="13" rx="2.200" fill="url(#cbg)" stroke="#d3612f" stroke-width="1"/><path d="M3.300 7.300 L7.500 11.400 L16 2.300" fill="none" stroke="#f6b391" stroke-width="3.400" stroke-linejoin="round" opacity=".75"/><path d="M3.400 7.300 L7.500 11.300 L16 2.300" fill="none" stroke="#7a3a24" stroke-width="2.200" stroke-linejoin="miter"/></svg>
  <svg class="abs" style="left:8.4px;top:157.6px" width="8" height="7" viewBox="0 0 8 7"><path d="M0.500 0.600 H7.500 L4 6.400 Z" fill="#707070" stroke="#3a3a3a" stroke-width="0.800" stroke-linejoin="round"/></svg><svg class="abs" style="left:22.8px;top:153.5px" width="17" height="16" viewBox="0 0 17 16"><ellipse cx="6" cy="2.600" rx="2.700" ry="1.900" fill="#1d1d9a"/><rect x="3.600" y="2.400" width="5" height="0.900" fill="#efe6a8"/><path d="M3.300 3 Q6 5 8.700 3" stroke="#9aa6d8" stroke-width="0.700" fill="none"/><path d="M1 15.300 V8.500 Q1 6.600 2.600 6.600 L2.600 15.300 Z" fill="#0a0a0a"/><rect x="2.600" y="7.400" width="1.500" height="7.900" fill="#bdbdbd"/><path d="M4.400 6.300 H7.400 V15.300 H5.800 V10 H4.400 Z" fill="#1a1a1a"/><path d="M6.600 9.600 L8 10.800 L6.600 12 Z" fill="#9a9a9a"/><path d="M8 8.200 Q10.800 7.400 11.300 10.500 Q11.700 14.300 13.500 14.500 Q15.300 14 16.200 10.800" fill="none" stroke="#111" stroke-width="1.300"/><path d="M9 13 L11 15.300 H8.600 Z" fill="#111"/></svg><div class="row blue" style="left:45.4px;top:152px;letter-spacing:0.290px;margin-left:-0.5px;">RobotModel</div><svg class="abs" style="left:185.5px;top:152.5px" width="17" height="16" viewBox="0 0 17 16"><rect x="1" y="1.500" width="13" height="13" rx="2.200" fill="url(#cbg)" stroke="#d3612f" stroke-width="1"/><path d="M3.300 7.300 L7.500 11.400 L16 2.300" fill="none" stroke="#f6b391" stroke-width="3.400" stroke-linejoin="round" opacity=".75"/><path d="M3.400 7.300 L7.500 11.300 L16 2.300" fill="none" stroke="#7a3a24" stroke-width="2.200" stroke-linejoin="miter"/></svg>
  <svg class="abs" style="left:28.4px;top:176.5px" width="7" height="8" viewBox="0 0 7 8"><path d="M0.600 0.500 V7.500 L6.400 4 Z" fill="#707070" stroke="#3a3a3a" stroke-width="0.800" stroke-linejoin="round"/></svg><svg class="abs" style="left:43.7px;top:173px" width="14" height="14" viewBox="0 0 14 14"><path d="M0.300 8.500 L2.300 7.200 Q3.500 8.600 4.200 10.200 Q8 4 13.100 0.200 L13.500 0.900 Q8.600 6 4.700 13.100 H3.200 Q2.200 10.600 0.300 8.500 Z" fill="#1a7a1a"/></svg><div class="row blk" style="left:65.4px;top:171px;letter-spacing:-0.192px;">Status: Ok</div>
  <div class="row" style="left:43.4px;top:190px;letter-spacing:-0.090px;">Visual Enabled</div><svg class="abs" style="left:185.5px;top:190.5px" width="17" height="16" viewBox="0 0 17 16"><rect x="1" y="1.500" width="13" height="13" rx="2.200" fill="url(#cbg)" stroke="#d3612f" stroke-width="1"/><path d="M3.300 7.300 L7.500 11.400 L16 2.300" fill="none" stroke="#f6b391" stroke-width="3.400" stroke-linejoin="round" opacity=".75"/><path d="M3.400 7.300 L7.500 11.300 L16 2.300" fill="none" stroke="#7a3a24" stroke-width="2.200" stroke-linejoin="miter"/></svg>
  <div class="row" style="left:43.4px;top:209px;letter-spacing:-0.010px;">Collision Enabled</div><div class="cb" style="left:186px;top:211.5px;width:14px;height:14px"></div>
  <div class="row" style="left:43.4px;top:228px;letter-spacing:0.357px;margin-left:-0.5px;">Update Interval</div><div class="row" style="left:183.5px;top:228px;">0</div>
  <div class="row" style="left:43.4px;top:247px;letter-spacing:-0.183px;">Alpha</div><div class="row" style="left:183.5px;top:247px;">1</div>
  <div class="row" style="left:43.4px;top:266px;letter-spacing:0.313px;margin-left:-0.5px;">Robot Description</div><div class="row" style="left:183.5px;top:266px;letter-spacing:0.448px;margin-left:-0.5px;">robot_description</div>
  <div class="row" style="left:43.4px;top:285px;letter-spacing:-0.193px;">TF Prefix</div>
  <svg class="abs" style="left:28.4px;top:309.5px" width="7" height="8" viewBox="0 0 7 8"><path d="M0.600 0.500 V7.500 L6.400 4 Z" fill="#707070" stroke="#3a3a3a" stroke-width="0.800" stroke-linejoin="round"/></svg><div class="row" style="left:43.4px;top:304px;letter-spacing:0.117px;margin-left:-0.5px;">Links</div>
  <svg class="abs" style="left:8.4px;top:328.6px" width="8" height="7" viewBox="0 0 8 7"><path d="M0.500 0.600 H7.500 L4 6.400 Z" fill="#707070" stroke="#3a3a3a" stroke-width="0.800" stroke-linejoin="round"/></svg><svg class="abs" style="left:23px;top:325px" width="16" height="15" viewBox="0 0 16 15"><path d="M8.500 8.300 L15.600 6.200" stroke="#19c619" stroke-width="1.300"/><path d="M8.500 8.300 L9.600 0.300" stroke="#1a2ad8" stroke-width="1.300"/><path d="M8.500 8.300 L0.600 14.300" stroke="#e01b1b" stroke-width="1.400"/><path d="M6 5 L8.500 8.300 L5 11" stroke="#222" stroke-width="0.700" fill="none"/></svg><div class="row blue" style="left:45.4px;top:323px;letter-spacing:-1.166px;">TF</div><svg class="abs" style="left:185.5px;top:323.5px" width="17" height="16" viewBox="0 0 17 16"><rect x="1" y="1.500" width="13" height="13" rx="2.200" fill="url(#cbg)" stroke="#d3612f" stroke-width="1"/><path d="M3.300 7.300 L7.500 11.400 L16 2.300" fill="none" stroke="#f6b391" stroke-width="3.400" stroke-linejoin="round" opacity=".75"/><path d="M3.400 7.300 L7.500 11.300 L16 2.300" fill="none" stroke="#7a3a24" stroke-width="2.200" stroke-linejoin="miter"/></svg>
  <svg class="abs" style="left:28.4px;top:347.5px" width="7" height="8" viewBox="0 0 7 8"><path d="M0.600 0.500 V7.500 L6.400 4 Z" fill="#707070" stroke="#3a3a3a" stroke-width="0.800" stroke-linejoin="round"/></svg><svg class="abs" style="left:43.7px;top:344px" width="14" height="14" viewBox="0 0 14 14"><path d="M0.300 8.500 L2.300 7.200 Q3.500 8.600 4.200 10.200 Q8 4 13.100 0.200 L13.500 0.900 Q8.600 6 4.700 13.100 H3.200 Q2.200 10.600 0.300 8.500 Z" fill="#1a7a1a"/></svg><div class="row blk" style="left:65.4px;top:342px;letter-spacing:-0.192px;">Status: Ok</div>
  <div class="row" style="left:43.4px;top:361px;letter-spacing:-0.289px;">Show Names</div><svg class="abs" style="left:185.5px;top:361.5px" width="17" height="16" viewBox="0 0 17 16"><rect x="1" y="1.500" width="13" height="13" rx="2.200" fill="url(#cbg)" stroke="#d3612f" stroke-width="1"/><path d="M3.300 7.300 L7.500 11.400 L16 2.300" fill="none" stroke="#f6b391" stroke-width="3.400" stroke-linejoin="round" opacity=".75"/><path d="M3.400 7.300 L7.500 11.300 L16 2.300" fill="none" stroke="#7a3a24" stroke-width="2.200" stroke-linejoin="miter"/></svg>
  <div class="row" style="left:43.4px;top:380px;letter-spacing:-0.202px;">Show Axes</div><svg class="abs" style="left:185.5px;top:380.5px" width="17" height="16" viewBox="0 0 17 16"><rect x="1" y="1.500" width="13" height="13" rx="2.200" fill="url(#cbg)" stroke="#d3612f" stroke-width="1"/><path d="M3.300 7.300 L7.500 11.400 L16 2.300" fill="none" stroke="#f6b391" stroke-width="3.400" stroke-linejoin="round" opacity=".75"/><path d="M3.400 7.300 L7.500 11.300 L16 2.300" fill="none" stroke="#7a3a24" stroke-width="2.200" stroke-linejoin="miter"/></svg>
  <div class="row" style="left:43.4px;top:399px;letter-spacing:0.075px;">Show Arrows</div><svg class="abs" style="left:185.5px;top:399.5px" width="17" height="16" viewBox="0 0 17 16"><rect x="1" y="1.500" width="13" height="13" rx="2.200" fill="url(#cbg)" stroke="#d3612f" stroke-width="1"/><path d="M3.300 7.300 L7.500 11.400 L16 2.300" fill="none" stroke="#f6b391" stroke-width="3.400" stroke-linejoin="round" opacity=".75"/><path d="M3.400 7.300 L7.500 11.300 L16 2.300" fill="none" stroke="#7a3a24" stroke-width="2.200" stroke-linejoin="miter"/></svg>
  <div class="row" style="left:43.4px;top:418px;letter-spacing:-0.111px;margin-left:-0.5px;">Marker Scale</div><div class="row" style="left:183.5px;top:418px;letter-spacing:-0.509px;">0.3</div>
  <div class="row" style="left:43.4px;top:437px;letter-spacing:0.357px;margin-left:-0.5px;">Update Interval</div><div class="row" style="left:183.5px;top:437px;">0</div>
  <div class="row" style="left:43.4px;top:456px;letter-spacing:0.116px;margin-left:-0.5px;">Frame Timeout</div><div class="row" style="left:183.5px;top:456px;letter-spacing:0.455px;margin-left:-0.5px;">15</div>
  <svg class="abs" style="left:28.4px;top:480.5px" width="7" height="8" viewBox="0 0 7 8"><path d="M0.600 0.500 V7.500 L6.400 4 Z" fill="#707070" stroke="#3a3a3a" stroke-width="0.800" stroke-linejoin="round"/></svg><div class="row" style="left:43.4px;top:475px;letter-spacing:-0.169px;margin-left:-0.5px;">Frames</div>
  <svg class="abs" style="left:28.4px;top:499.5px" width="7" height="8" viewBox="0 0 7 8"><path d="M0.600 0.500 V7.500 L6.400 4 Z" fill="#707070" stroke="#3a3a3a" stroke-width="0.800" stroke-linejoin="round"/></svg><div class="row" style="left:43.4px;top:494px;letter-spacing:-0.152px;">Tree</div>
</div>
<div class="abs" style="left:243px;top:722px;width:1px;height:4px;background:#c2bfba;box-shadow:2px 0 0 #c2bfba,4px 0 0 #c2bfba"></div>
<div class="tree" style="left:65px;top:727px;width:362px;height:78px"></div>
<div class="btn" style="left:68px;top:812px;width:83px;height:25px;line-height:23px"><span style="letter-spacing:-0.030px;">Add</span></div>
<div class="btn dis" style="left:159px;top:812px;width:83px;height:25px;line-height:23px"><span style="letter-spacing:0.387px;">Duplicate</span></div>
<div class="btn dis" style="left:250px;top:812px;width:83px;height:25px;line-height:23px"><span style="letter-spacing:-0.043px;">Remove</span></div>
<div class="btn dis" style="left:341px;top:812px;width:83px;height:25px;line-height:23px"><span style="letter-spacing:-0.172px;">Rename</span></div>
<svg class="abs" style="left:438px;top:449px" width="6" height="9" viewBox="0 0 6 9"><path d="M5 0.800 V8.200 L0.800 4.500 Z" fill="#8a8a8a" stroke="#666" stroke-width="0.600"/></svg>
<svg class="abs" style="left:1345px;top:449px" width="6" height="9" viewBox="0 0 6 9"><path d="M1 0.800 V8.200 L5.200 4.500 Z" fill="#8a8a8a" stroke="#666" stroke-width="0.600"/></svg>
<!-- ===== 3D viewport ===== -->
<div class="abs" style="left:448px;top:63px;width:892px;height:780px;background:#fbfbfa"></div>
<svg id="view" class="abs" style="left:449px;top:64px;background:#303030" width="890" height="778" viewBox="449 64 890 778">
<defs>
<linearGradient id="gCyl" x1="0" y1="0" x2="1" y2="0"><stop offset="0" stop-color="#7e7e7e"/><stop offset="0.200" stop-color="#a0a0a0"/><stop offset="0.500" stop-color="#8e8e8e"/><stop offset="0.850" stop-color="#6c6c6c"/><stop offset="1" stop-color="#5e5e5e"/></linearGradient>
<radialGradient id="gBall" cx="0.600" cy="0.600" r="0.620"><stop offset="0" stop-color="#ffffff"/><stop offset="0.400" stop-color="#f2f2f2"/><stop offset="0.750" stop-color="#cfcfcf"/><stop offset="1" stop-color="#9c9c9c"/></radialGradient>
<linearGradient id="gTop" x1="0" y1="1" x2="1" y2="0"><stop offset="0" stop-color="#7c7c7c"/><stop offset="0.450" stop-color="#969696"/><stop offset="0.800" stop-color="#a8a8a8"/><stop offset="1" stop-color="#8c8c8c"/></linearGradient>
<linearGradient id="gWr" x1="0" y1="0" x2="1" y2="0"><stop offset="0" stop-color="#9c9c9c"/><stop offset="0.300" stop-color="#d6d6d6"/><stop offset="0.600" stop-color="#b0b0b0"/><stop offset="0.800" stop-color="#858585"/><stop offset="1" stop-color="#727272"/></linearGradient>
<linearGradient id="gCol" x1="0" y1="0" x2="1" y2="0"><stop offset="0" stop-color="#a0a0a0"/><stop offset="0.300" stop-color="#d8d8d8"/><stop offset="0.700" stop-color="#bcbcbc"/><stop offset="1" stop-color="#8a8a8a"/></linearGradient>
<linearGradient id="gNeck" x1="0" y1="0" x2="1" y2="0"><stop offset="0" stop-color="#b0b0b0"/><stop offset="0.350" stop-color="#e2e2e2"/><stop offset="1" stop-color="#c4c4c4"/></linearGradient>
<linearGradient id="gRim" x1="0" y1="0" x2="1" y2="0"><stop offset="0" stop-color="#ffffff"/><stop offset="1" stop-color="#b8b8b8"/></linearGradient>
<linearGradient id="gDisk" x1="0" y1="0" x2="1" y2="0"><stop offset="0" stop-color="#a4a4a4"/><stop offset="1" stop-color="#7a7a7a"/></linearGradient>
<filter id="fNo" x="-5%" y="-20%" width="110%" height="140%"><feOffset dx="0" dy="0"/></filter>
</defs>
<rect x="449.500" y="64.500" width="889" height="777" fill="none" stroke="#262626" stroke-width="1"/>
<g stroke="#6c6c6c" stroke-width="1" fill="none" shape-rendering="crispEdges">
<path d="M449 394.3 L1339 651.3"/>
<path d="M449 184.6 L1339 329.3"/>
<path d="M449 102.2 L1339 203.3"/>
<path d="M509.5 63.8 L1339 135.7"/>
<path d="M910.4 63.8 L1339 94.3"/>
<path d="M1313 64.6 L1339 66.1"/>
<path d="M449 350.9 L1108 63.8"/>
<path d="M449 186.3 L902 63.8"/>
<path d="M449 112.5 L695.2 63.8"/>
<path d="M449 70.3 L489 63.8"/>
</g>
<path d="M601.500 841.500 L1314 63.800" stroke="#7c7c7c" stroke-width="0.850" fill="none"/>
<g id="robot">
<path d="M847.4 528.7 L860.9 515.9 L935.8 503.9 L942.1 509.6 L908.5 550.3 Z" fill="#858585"/>
<path d="M847.4 528.7 L908.5 550.3 L942.1 509.6 L942.1 512.3 L908.8 553.0 L847.7 531.7 Z" fill="#5a5a5a"/>
<circle cx="853.4" cy="529.0" r="0.9" fill="#c8c8c8"/>
<circle cx="907.3" cy="544.6" r="0.9" fill="#c8c8c8"/>
<circle cx="937.0" cy="510.8" r="0.9" fill="#c8c8c8"/>
<path d="M927.5 464.2 L934.3 466.4 L934.3 497.9 L927.5 500.9 Z" fill="#6a6a6a"/>
<path d="M929.8 472.4 L932.2 473.2 L932.2 496.7 L929.8 497.1 Z" fill="#9c9c9c"/>
<path d="M857.9 476.9 V528.1 A35.2 16.2 0 0 0 928.3 528.1 V476.9 Z" fill="url(#gCyl)"/>
<path d="M857.9 458.9 V479.2 A35.2 11.2 0 0 0 928.3 479.2 V458.9 Z" fill="url(#gCol)"/>
<path d="M861.6 447.0 C854.4 450.2 861.9 459.8 863.9 464.9 C865.9 470.1 868.6 472.7 872.9 475.4 C877.2 478.1 883.0 479.4 887.8 479.9 C892.7 480.5 896.9 480.0 899.8 478.4 C902.8 476.8 903.5 476.6 904.3 470.9 C905.1 465.3 912.0 451.3 904.3 447.0 C896.6 442.6 868.9 443.7 861.6 447.0 Z" fill="#8a8a8a"/>
<path d="M872.8 377.8 C866.2 380.8 871.1 391.3 870.5 396.8 C870.0 402.4 870.2 408.1 869.4 412.6 C868.6 417.0 866.8 420.8 865.5 424.9 C864.2 429.0 862.1 434.4 861.3 438.4 C860.5 442.3 860.2 446.0 860.4 449.6 C860.6 453.2 861.2 457.4 862.7 460.8 C864.1 464.2 866.2 468.3 869.4 470.9 C872.6 473.6 878.2 476.2 882.9 477.5 C887.5 478.7 894.5 479.1 898.6 478.6 C902.7 478.1 906.6 477.5 908.7 474.3 C910.8 471.1 911.1 474.0 911.5 458.6 C912.0 443.1 917.7 390.7 911.5 377.8 C905.3 364.8 879.3 374.7 872.8 377.8 Z" fill="url(#gBall)"/>
<path d="M861.8 451.9 C861.0 452.2 863.1 459.0 864.9 462.0 C866.7 464.9 869.5 468.2 872.8 470.4 C876.0 472.5 881.0 474.5 885.1 475.4 C889.2 476.4 894.8 477.0 898.6 476.3 C902.4 475.7 906.7 474.3 908.7 471.5 C910.7 468.7 911.5 459.6 910.9 458.6 C910.4 457.6 908.0 463.7 905.3 465.3 C902.6 466.9 898.1 468.5 894.1 468.7 C890.1 468.9 884.6 467.9 880.6 466.4 C876.7 465.0 872.4 462.0 869.4 459.7 C866.4 457.4 862.5 451.5 861.8 451.9 Z" fill="#000000" opacity="0.180"/>
<path d="M862.7 442.9 C861.6 443.1 860.7 449.2 861.8 451.9 C862.8 454.5 866.4 457.4 869.4 459.7 C872.4 462.0 876.7 465.0 880.6 466.4 C884.6 467.9 890.1 468.9 894.1 468.7 C898.1 468.5 902.6 466.9 905.3 465.3 C908.0 463.7 910.0 461.5 910.9 458.6 C911.9 455.7 912.4 447.5 911.2 447.4 C909.9 447.2 906.2 455.3 903.1 457.5 C900.0 459.6 895.8 460.8 891.9 460.8 C887.9 460.8 882.2 459.1 878.4 457.5 C874.6 455.9 870.8 453.1 868.3 450.7 C865.8 448.4 863.7 442.7 862.7 442.9 Z" fill="#000000" opacity="0.070"/>
<path d="M872.8 377.8 C867.0 380.4 871.0 392.0 870.5 396.8 C870.1 401.7 868.3 409.7 869.4 412.6 C870.5 415.4 874.9 416.2 878.4 417.0 C881.8 417.9 889.5 418.7 894.1 418.7 C898.7 418.7 909.1 422.8 911.5 417.0 C913.9 411.3 916.9 383.3 911.5 377.8 C906.1 372.3 878.5 375.1 872.8 377.8 Z" fill="#000000" opacity="0.130"/>
<path d="M898.6 427.2 C899.5 426.8 906.7 434.4 908.7 438.4 C910.7 442.3 911.0 447.5 911.2 451.9 C911.3 456.2 911.1 461.7 909.8 465.3 C908.5 468.9 906.0 472.5 903.1 474.3 C900.2 476.1 892.6 477.6 891.9 476.6 C891.1 475.5 896.8 471.2 898.6 467.6 C900.4 464.0 902.4 458.4 903.1 454.1 C903.8 449.8 903.8 444.9 903.1 440.6 C902.4 436.3 897.7 427.5 898.6 427.2 Z" fill="#000000" opacity="0.100"/>
<path d="M861.0 442.9 C861.3 445.7 860.9 453.5 862.7 458.6 C864.4 463.6 866.9 467.5 870.5 470.9 C874.2 474.4 877.8 476.3 882.9 477.7 C887.9 479.1 895.8 478.6 898.6 478.8" fill="none" stroke="#ffffff" stroke-width="1.0"/>
<path d="M863.2 451.9 C864.0 454.0 865.4 460.0 867.7 463.6 C870.0 467.3 872.6 469.9 876.1 472.1 C879.7 474.2 882.9 474.9 887.4 475.4 C891.8 475.9 898.4 475.0 900.8 474.9" fill="none" stroke="#9a9a9a" stroke-width="0.9"/>
<path d="M913.4 316.3 C914.8 315.1 916.1 316.9 917.3 317.5 C918.5 318.0 922.3 319.5 923.5 321.0 C924.7 322.6 927.0 317.9 927.4 330.4 C927.8 342.8 926.5 412.2 926.7 424.9 C926.8 437.6 928.0 432.8 928.3 436.1 C928.6 439.5 929.3 448.9 929.1 453.0 C929.0 457.0 928.2 466.7 927.2 469.8 C926.2 472.9 922.7 477.9 921.0 478.8 C919.4 479.7 914.5 480.1 913.2 477.7 C911.8 475.3 910.2 464.9 909.8 458.6 C909.4 452.3 909.7 434.3 909.8 424.9 C910.0 415.5 912.2 386.8 910.9 380.0 C909.7 373.2 900.9 370.6 899.4 368.0 C897.8 365.3 898.1 361.0 898.2 357.9 C898.4 354.8 899.6 345.8 900.5 342.2 C901.4 338.5 904.0 330.7 905.5 327.6 C907.1 324.5 912.0 317.5 913.4 316.3 Z" fill="#757575"/>
<ellipse cx="919.4" cy="451.9" rx="9.600" ry="26" fill="url(#gDisk)"/>
<path d="M917.7 424.9 C916.2 427.3 911.5 432.7 909.3 438.4 C907.0 444.0 905.6 450.3 905.1 456.3 C904.6 462.4 905.2 467.9 906.2 472.1 C907.3 476.2 910.1 478.0 910.9 479.4" fill="none" stroke="#e4e4e4" stroke-width="3.6"/>
<ellipse cx="891.9" cy="392.9" rx="16.800" ry="15.800" fill="#e2e2e2"/>
<path d="M880.6 404.1 C881.8 404.7 884.1 406.8 887.4 407.5 C890.6 408.2 896.6 408.0 898.6 408.1" fill="none" stroke="#7a7a7a" stroke-width="1.2"/>
<path d="M880.8 373.6 L892.1 366.9 L899.4 368.0 L901.6 375.8 L897.7 379.0 L883.1 378.6 Z" fill="#505050"/>
<path d="M894.1 378.9 L894.1 389.0" stroke="#12c812" stroke-width="3.6" stroke-linecap="butt" fill="none"/>
<path d="M894.1 389.0 L894.1 401.1" stroke="#b3a548" stroke-width="1.7" stroke-linecap="butt" fill="none"/>
<g font-family="'Liberation Sans',sans-serif" fill="#ffffff" font-size="24.500" filter="url(#fNo)">
<text x="790.700" y="417" letter-spacing="0.400">link5</text>
<text x="812.800" y="400.600">link4</text>
</g>
<path d="M790.3 372.2 L800.6 374.8" stroke="#0000a8" stroke-width="4.4" stroke-linecap="butt" fill="none"/>
<path d="M790.3 372.2 L800.6 374.8" stroke="#0a0af0" stroke-width="2.728" stroke-linecap="butt" fill="none"/>
<path d="M767.2 387.0 L802.5 395.3" stroke="#0a9a0a" stroke-width="4.6" stroke-linecap="butt" fill="none"/>
<path d="M767.2 387.0 L802.5 395.3" stroke="#18e018" stroke-width="2.852" stroke-linecap="butt" fill="none"/>
<path d="M818.1 418.4 L818.5 448.6" stroke="#0000a8" stroke-width="5" stroke-linecap="butt" fill="none"/>
<path d="M818.1 418.4 L818.5 448.6" stroke="#0a0af0" stroke-width="3.1" stroke-linecap="butt" fill="none"/>
<path d="M811.5 359.4 C809.5 357.7 813.5 352.4 815.3 350.4 C817.2 348.4 823.3 344.9 826.9 342.7 C830.4 340.5 840.2 333.7 844.8 332.4 C849.5 331.2 862.9 329.0 865.4 332.4 C867.8 335.8 867.8 355.7 865.4 360.7 C862.9 365.6 848.8 373.0 844.8 373.5 C840.8 374.0 836.0 366.2 832.0 364.5 C828.0 362.8 813.5 361.1 811.5 359.4 Z" fill="#787878"/>
<path d="M812.8 358.1 C813.4 356.7 815.0 352.6 816.6 350.4 C818.2 348.2 820.8 346.7 821.7 345.9" fill="none" stroke="#b0b0b0" stroke-width="1"/>
<path d="M812.3 359.6 C811.5 358.3 814.8 353.7 815.7 352.3 C816.7 350.8 818.1 349.5 820.2 347.8 C822.4 346.1 830.0 340.7 833.7 338.2 C837.3 335.7 846.5 329.7 850.5 327.0 C854.6 324.3 863.7 318.2 867.4 315.8 C871.0 313.3 878.1 308.3 880.8 306.8 C883.5 305.3 887.4 303.8 889.8 303.4 C892.2 303.1 898.3 303.3 901.0 304.0 C903.7 304.7 909.8 307.4 912.3 309.0 C914.8 310.6 921.8 316.2 921.8 317.2 C921.8 318.2 914.8 316.6 912.3 317.5 C909.8 318.3 904.4 322.4 901.0 324.4 C897.7 326.5 888.2 332.2 884.2 334.5 C880.2 336.8 870.7 341.6 867.4 343.5 C864.0 345.4 858.3 348.5 856.1 350.2 C854.0 352.0 850.7 355.9 849.4 357.9 C848.1 359.9 846.4 365.8 844.9 366.9 C843.4 367.9 839.7 367.4 837.0 366.9 C834.4 366.3 825.4 363.2 822.5 362.4 C819.5 361.5 813.2 360.8 812.3 359.6 Z" fill="url(#gTop)"/>
<path d="M860.6 319.1 L881.4 322.5 L873.0 330.0 L852.8 326.8 Z" fill="#b6b6b6" stroke="#7a7a7a" stroke-width="0.7"/>
<path d="M839.9 336.0 L852.8 339.3 L853.9 353.4 L844.9 362.4 L839.9 364.6 Z" fill="#b8b8b8"/>
<path d="M852.8 343.3 L860.1 341.9 L858.9 347.8 L853.0 350.2 Z" fill="#6e6e6e"/>
<path d="M839.3 332.9 L847.2 332.0 L865.7 338.6 L864.9 341.6 L839.3 336.8 Z" fill="#d8d8d8"/>
<path d="M836.2 329.2 L837.0 366.3" stroke="#0a960a" stroke-width="5.4" stroke-linecap="butt" fill="none"/>
<path d="M836.2 329.2 L837.0 366.3" stroke="#16dc16" stroke-width="3.3480000000000003" stroke-linecap="butt" fill="none"/>
<path d="M856.1 350.0 C858.1 348.3 864.0 345.2 867.4 343.3 C870.7 341.4 880.2 336.6 884.2 334.3 C888.2 332.0 897.5 326.3 901.0 324.2 C904.6 322.1 913.1 316.2 913.6 316.6 C914.2 317.0 907.1 324.5 905.5 327.6 C904.0 330.6 901.4 338.5 900.5 342.2 C899.6 345.8 898.4 354.8 898.2 357.9 C898.1 361.0 900.1 366.9 899.4 368.0 C898.6 369.1 894.0 366.2 892.1 366.9 C890.1 367.6 885.6 371.7 883.3 373.8 C881.0 375.9 874.9 381.9 872.5 384.1 C870.2 386.4 865.6 390.6 863.5 392.2 C861.5 393.9 857.4 397.6 855.6 398.1 C853.8 398.5 849.8 397.5 848.6 396.0 C847.4 394.6 845.6 388.9 845.5 385.9 C845.3 383.0 846.5 374.7 847.2 371.3 C847.8 368.0 850.0 360.4 851.1 357.9 C852.2 355.3 854.2 351.8 856.1 350.0 Z" fill="#6d6d6d"/>
<path d="M858.6 349.6 C857.1 351.5 852.6 355.8 850.3 360.1 C848.0 364.4 846.5 368.9 845.6 373.6 C844.7 378.3 844.6 382.2 845.2 386.2 C845.9 390.1 847.3 393.5 849.0 395.6 C850.6 397.7 853.6 397.3 854.6 397.7" fill="none" stroke="#cdcdcd" stroke-width="5.2"/>
<path d="M856.8 349.3 C855.2 351.3 850.5 355.8 848.1 360.1 C845.6 364.5 844.2 368.8 843.3 373.6 C842.4 378.4 842.4 382.8 843.1 386.8 C843.8 390.9 846.4 394.6 847.2 396.3" fill="none" stroke="#f6f6f6" stroke-width="1.3"/>
<circle cx="856.1" cy="387.3" r="1.3" fill="#f4f4f4"/>
<path d="M919.0 316.8 C916.9 318.8 910.4 323.5 907.2 328.1 C904.0 332.8 902.6 337.4 901.4 342.7 C900.1 348.1 900.1 352.9 900.3 357.9 C900.4 362.8 900.6 366.5 902.2 370.2 C903.7 374.0 907.7 377.1 908.9 378.6" fill="none" stroke="#d2d2d2" stroke-width="5.2"/>
<path d="M917.0 316.3 C914.8 318.4 908.2 323.1 905.0 327.8 C901.8 332.5 900.4 337.0 899.1 342.4 C897.9 347.8 897.8 352.7 898.0 357.9 C898.2 363.0 899.8 368.6 900.1 370.9" fill="none" stroke="#f8f8f8" stroke-width="1.3"/>
<path d="M800.6 369.4 V399.8 Q802.6 405.8 816.6 407.3 Q834.7 405.8 838.2 395.3 L840.7 369.4 Z" fill="url(#gWr)"/>
<path d="M832.6 372.2 L840.7 369.0 L838.2 395.3 L832.0 403.7 L830.1 373.5 Z" fill="#7c7c7c"/>
<path d="M799.9 368.1 C800.2 367.0 804.5 361.8 805.7 360.9 C806.8 360.0 808.8 358.6 811.5 358.9 C814.1 359.1 829.1 362.4 832.0 363.4 C834.9 364.3 840.2 367.8 840.7 368.6 C841.2 369.4 838.5 370.9 837.1 371.4 C835.7 372.0 829.6 373.5 826.9 373.8 C824.2 374.0 812.6 374.2 810.2 374.0 C807.8 373.8 803.8 372.3 802.7 371.7 C801.7 371.1 799.6 369.2 799.9 368.1 Z" fill="#a8a8a8" stroke="#dadada" stroke-width="0.7"/>
<circle cx="804.4" cy="365.8" r="0.8" fill="#e8e8e8"/>
<circle cx="811.5" cy="364.8" r="0.8" fill="#e8e8e8"/>
<circle cx="813.4" cy="368.1" r="0.8" fill="#e8e8e8"/>
<circle cx="819.2" cy="363.5" r="0.8" fill="#e8e8e8"/>
<circle cx="821.7" cy="367.1" r="0.8" fill="#e8e8e8"/>
<path d="M838.7 372.5 L839.7 393.4" stroke="#e8e8e8" stroke-width="0.9" stroke-linecap="butt" fill="none"/>
<path d="M806.3 406.2 L827.5 406.2 L829.7 412.0 L827.1 417.1 L816.6 419.2 L806.6 417.4 Z" fill="#7a7a7a"/>
<path d="M815.3 406.2 L827.5 406.2 L829.7 412.0 L827.1 417.1 L816.6 419.2 Z" fill="#6c6c6c"/>
<path d="M823.0 406.2 L827.5 406.2 L829.7 412.0 L827.1 417.1 L823.0 418.2 Z" fill="#787878"/>
<path d="M785.5 421.2 L809.5 403.3" stroke="#7a0000" stroke-width="5" stroke-linecap="butt" fill="none"/>
<path d="M785.5 421.2 L809.5 403.3" stroke="#b00000" stroke-width="3.1" stroke-linecap="butt" fill="none"/>
<circle cx="785.5" cy="421.2" r="2.500" fill="#e80000"/>
<path d="M914.7 346.9 L940.0 351.7" stroke="#0000a8" stroke-width="5" stroke-linecap="butt" fill="none"/>
<path d="M914.7 346.9 L940.0 351.7" stroke="#0a0af0" stroke-width="3.1" stroke-linecap="butt" fill="none"/>
<path d="M898.8 341.6 L899.9 345.5" stroke="#0a0af0" stroke-width="2" stroke-linecap="butt" fill="none"/>
<circle cx="915.6" cy="350.8" r="1.1" fill="#f0f0f0"/>
<path d="M870.0 465.6 L878.9 459.2" stroke="#7a0000" stroke-width="4.6" stroke-linecap="butt" fill="none"/>
<path d="M870.0 465.6 L878.9 459.2" stroke="#b00000" stroke-width="2.852" stroke-linecap="butt" fill="none"/>
<path d="M894.1 474.9 L894.1 479.9" stroke="#0a960a" stroke-width="3.6" stroke-linecap="butt" fill="none"/>
<path d="M894.1 474.9 L894.1 479.9" stroke="#16dc16" stroke-width="2.232" stroke-linecap="butt" fill="none"/>
<path d="M916.6 450.2 L937.9 455.0" stroke="#0000a8" stroke-width="4.4" stroke-linecap="butt" fill="none"/>
<path d="M916.6 450.2 L937.9 455.0" stroke="#0a0af0" stroke-width="2.728" stroke-linecap="butt" fill="none"/>
<path d="M925.3 531.1 L934.3 535.0" stroke="#0a960a" stroke-width="4.2" stroke-linecap="butt" fill="none"/>
<path d="M925.3 531.1 L934.3 535.0" stroke="#16dc16" stroke-width="2.604" stroke-linecap="butt" fill="none"/>
<path d="M871.7 546.1 L878.1 540.7" stroke="#7a0000" stroke-width="4.2" stroke-linecap="butt" fill="none"/>
<path d="M871.7 546.1 L878.1 540.7" stroke="#b00000" stroke-width="2.604" stroke-linecap="butt" fill="none"/>
<circle cx="924.4" cy="433.7" r="1.1" fill="#f0f0f0"/>
<circle cx="917.7" cy="429.4" r="1.1" fill="#f0f0f0"/>
<circle cx="917.7" cy="453.5" r="1.1" fill="#f0f0f0"/>
<circle cx="918.8" cy="447.1" r="1.1" fill="#f0f0f0"/>
</g>
</svg>
<!-- ===== Views panel ===== -->
<div class="hdr" style="left:1361px;top:64px;width:559px;height:22px">
  <svg class="abs" style="left:3px;top:7px" width="18" height="10" viewBox="0 0 18 10"><path d="M0.800 1.200 L5.600 5 L0.800 8.800 Z" fill="#3a3a3a"/><rect x="5.200" y="0.800" width="11.800" height="8.400" rx="3" fill="#3a3a3a"/></svg>
  <div class="t" style="left:26.700px;top:3px;letter-spacing:0.012px;">Views</div>
</div>
<div class="t" style="left:1363.800px;top:97px;line-height:17px;letter-spacing:-0.005px;">Type:</div>
<div class="btn" style="left:1407px;top:93px;width:208px;height:25px;text-align:left;padding-left:5px;line-height:23px;background:linear-gradient(#fefefe,#eeedeb)"><span style="letter-spacing:0.272px;">Orbit (rviz)</span><svg class="abs" style="left:194px;top:8px" width="8" height="13" viewBox="0 0 8 13"><path d="M1 4 H7 L4 0.800 Z M1 9 H7 L4 12.200 Z" fill="#6f6f6f"/></svg></div>
<div class="tree" style="left:1361px;top:127px;width:559px;height:680px">
  <div class="abs" style="left:20px;top:0;width:538px;height:19px;background:#b9ada5"></div>
  <div class="abs" style="left:278px;top:0;width:1px;height:19px;background:#9c9088"></div>
  <div class="abs" style="left:278px;top:19px;width:1px;height:659px;background:#d4d2ce"></div>
<svg class="abs" style="left:8.6px;top:5.6px" width="8" height="7" viewBox="0 0 8 7"><path d="M0.500 0.600 H7.500 L4 6.400 Z" fill="#707070" stroke="#3a3a3a" stroke-width="0.800" stroke-linejoin="round"/></svg>
  <div class="row b" style="left:23.600px;top:0;letter-spacing:0.074px;">Current View</div>
  <div class="row b" style="left:281.400px;top:0">Orbit (rviz)</div>
  <div class="row" style="left:43.400px;top:19px;letter-spacing:0.006px;margin-left:-0.5px;">Near Clip Distance</div>
  <div class="row" style="left:281.300px;top:19px">0.01</div>
  <div class="row" style="left:43.400px;top:38px;letter-spacing:0.172px;margin-left:-0.5px;">Invert Z Axis</div>
  <div class="cb" style="left:284px;top:40.5px"></div>
  <div class="row" style="left:43.400px;top:57px;letter-spacing:0.058px;">Target Frame</div>
  <div class="row" style="left:281.300px;top:57px">&lt;Fixed Frame&gt;</div>
  <div class="row" style="left:43.400px;top:76px;letter-spacing:0.140px;margin-left:-0.5px;">Distance</div>
  <div class="row" style="left:281.300px;top:76px">1.35829</div>
  <div class="row" style="left:43.400px;top:95px;letter-spacing:-0.442px;margin-left:-0.5px;">Focal Shape Size</div>
  <div class="row" style="left:281.300px;top:95px">0.05</div>
  <div class="row" style="left:43.400px;top:114px;letter-spacing:-0.356px;margin-left:-0.5px;">Focal Shape Fixed Size</div>
  <svg class="abs" style="left:283px;top:114.5px" width="17" height="16" viewBox="0 0 17 16"><rect x="1" y="1.500" width="13" height="13" rx="2.200" fill="url(#cbg)" stroke="#d3612f" stroke-width="1"/><path d="M3.300 7.300 L7.500 11.400 L16 2.300" fill="none" stroke="#f6b391" stroke-width="3.400" stroke-linejoin="round" opacity=".75"/><path d="M3.400 7.300 L7.500 11.300 L16 2.300" fill="none" stroke="#7a3a24" stroke-width="2.200" stroke-linejoin="miter"/></svg>
  <div class="row" style="left:43.400px;top:133px;letter-spacing:-0.373px;">Yaw</div>
  <div class="row" style="left:281.300px;top:133px">0.785398</div>
  <div class="row" style="left:43.400px;top:152px;letter-spacing:0.371px;margin-left:-0.5px;">Pitch</div>
  <div class="row" style="left:281.300px;top:152px">0.785398</div>
  <svg class="abs" style="left:28.4px;top:176.5px" width="7" height="8" viewBox="0 0 7 8"><path d="M0.600 0.500 V7.500 L6.400 4 Z" fill="#707070" stroke="#3a3a3a" stroke-width="0.800" stroke-linejoin="round"/></svg>
  <div class="row" style="left:43.400px;top:171px;letter-spacing:-0.028px;margin-left:-0.5px;">Focal Point</div>
  <div class="row" style="left:281.300px;top:171px">0; 0; 0</div>
</div>
<div class="btn" style="left:1364px;top:814px;width:179px;height:25px;line-height:23px"><span style="letter-spacing:-0.454px;">Save</span></div>
<div class="btn" style="left:1551px;top:814px;width:179px;height:25px;line-height:23px"><span style="letter-spacing:-0.043px;">Remove</span></div>
<div class="btn" style="left:1738px;top:814px;width:179px;height:25px;line-height:23px"><span style="letter-spacing:-0.112px;">Rename</span></div>
<!-- ===== Time panel ===== -->
<div class="hdr" style="left:66px;top:848px;width:1854px;height:22px">
  <svg class="abs" style="left:3px;top:3px" width="17" height="17" viewBox="0 0 17 17"><circle cx="8.500" cy="8.500" r="6.900" fill="#fff" stroke="#2a2a2a" stroke-width="1.500"/><path d="M8.500 4.500 V9 H12" fill="none" stroke="#2a2a2a" stroke-width="1.300"/></svg>
  <div class="t" style="left:26px;top:3px;letter-spacing:-0.213px;">Time</div>
  <div class="closeb" style="left:1837.700px;top:3.700px"><svg width="13.4" height="15" viewBox="0 0 13.4 15" style="position:absolute;left:0;top:0"><path d="M3.600 4.400 L9.800 10.600 M9.800 4.400 L3.600 10.600" stroke="#6c6c6c" stroke-width="2.300" stroke-linecap="butt"/></svg></div>
</div>
<div class="t" style="left:76px;top:882px;line-height:17px;letter-spacing:-0.299px;margin-left:-0.5px;">ROS Time:</div>
<div class="inp" style="left:153px;top:877px;width:144px;height:25px;line-height:23px"><span style="letter-spacing:0.030px;">1646650174.12</span></div>
<div class="t" style="left:304px;top:882px;line-height:17px;letter-spacing:-0.416px;margin-left:-0.5px;">ROS Elapsed:</div>
<div class="inp" style="left:401px;top:877px;width:144px;height:25px;line-height:23px"><span style="letter-spacing:-0.150px;">166.65</span></div>
<div class="t" style="left:552.500px;top:882px;line-height:17px;letter-spacing:0.135px;">Wall Time:</div>
<div class="inp" style="left:630px;top:877px;width:144px;height:25px;line-height:23px"><span style="letter-spacing:0.030px;">1646650174.18</span></div>
<div class="t" style="left:781px;top:882px;line-height:17px;letter-spacing:-0.057px;">Wall Elapsed:</div>
<div class="inp" style="left:878px;top:877px;width:144px;height:25px;line-height:23px"><span style="letter-spacing:-0.150px;">166.65</span></div>
<div class="cb" style="left:1791px;top:883px"></div>
<div class="t" style="left:1813px;top:882px;line-height:17px;letter-spacing:0.435px;margin-left:-0.5px;">Experimental</div>
<!-- ===== status bar ===== -->
<div class="abs" style="left:66px;top:910px;width:1854px;height:1px;background:#dcdad7"></div>
<div class="abs" style="left:66px;top:912px;width:1854px;height:1px;background:#d0cdc9"></div>
<div class="btn" style="left:68px;top:914px;width:49px;height:25px;line-height:21px;text-align:left;padding-left:4px"><span style="letter-spacing:-0.255px;">Reset</span></div>
<div class="abs" style="left:119px;top:914px;width:1px;height:21px;background:#d9d6d2"></div>
<div class="t" style="left:124px;top:917.500px;font-family:'DejaVu Sans','Liberation Sans',sans-serif;font-size:13.300px;line-height:18px;color:#3c3c3c;letter-spacing:-0.057px;margin-left:-0.5px;"><b>Left-Click:</b> Rotate. <b>Middle-Click:</b> Move X/Y. <b>Right-Click/Mouse Wheel:</b>: Zoom. <b>Shift</b>: More options.</div>
<div class="abs" style="left:1872px;top:914px;width:1px;height:21px;background:#d9d6d2"></div>
<div class="abs" style="left:1875px;top:913px;width:45px;height:22px;border-left:1px solid #cfccc7;border-top:1px solid #cfccc7"></div>
<div class="t" style="left:1878px;top:913px;line-height:17px;letter-spacing:0.045px;margin-left:-0.5px;">16 fps</div>
<!-- bottom-right artifacts -->
<svg class="abs" style="left:1696px;top:926px" width="224" height="9" viewBox="0 0 224 9"><path d="M3.500 9 L16 5 L31.500 2 Q34.800 1.700 35.300 4.500 L36 9 Z" fill="#f1662d"/><rect x="36" y="7.300" width="188" height="1.700" fill="#f7f9fc"/><rect x="36" y="6.700" width="188" height="0.700" fill="#bccde4"/></svg>
<!-- ===== joint_state_publisher_gui window ===== -->
<div id="jsp" class="abs" style="left:1654px;top:24px;width:266px;height:498px;background:#f2f1f0;border-radius:6px 0 0 0;box-shadow:0 3px 5px -1px rgba(0,0,0,.34),-3px 1px 5px -1px rgba(0,0,0,.10)">
  <div class="abs" style="left:0;top:0;width:266px;height:28px;border-radius:6px 0 0 0;background:linear-gradient(#5b5951 0%,#4a4943 50%,#3e3d39 100%);border-top:1px solid #6b6961"></div>
  <svg class="abs" style="left:6px;top:5px" width="60" height="19" viewBox="0 0 60 19"><defs><linearGradient id="wb1" x1="0" y1="0" x2="0" y2="1"><stop offset="0" stop-color="#f58a62"/><stop offset="1" stop-color="#df4f22"/></linearGradient><linearGradient id="wb2" x1="0" y1="0" x2="0" y2="1"><stop offset="0" stop-color="#9a978e"/><stop offset="1" stop-color="#7a776f"/></linearGradient></defs><circle cx="9.500" cy="9.700" r="7.600" fill="url(#wb1)" stroke="#3a3834" stroke-width="1"/><path d="M6.800 7 L12.200 12.400 M12.200 7 L6.800 12.400" stroke="#5a2412" stroke-width="1.500"/><circle cx="28.500" cy="9.700" r="7.600" fill="url(#wb2)" stroke="#3a3834" stroke-width="1"/><path d="M25 9.900 H32" stroke="#44423d" stroke-width="1.500"/><circle cx="47.500" cy="9.700" r="7.600" fill="url(#wb2)" stroke="#3a3834" stroke-width="1"/><rect x="44.600" y="6.900" width="5.800" height="5.600" fill="none" stroke="#44423d" stroke-width="1.300"/></svg>
  <div class="t" style="left:73.300px;top:6px;font-weight:bold;font-size:15.200px;line-height:18px;color:#dfdbd2;letter-spacing:0.026px;">joint_state_publisher_gui</div>
  <div class="abs" style="left:11px;top:39px;width:244px;height:349px;border:1px solid #c9c5bf;border-radius:2px"></div>
  <div class="t" style="left:21px;top:55px;font-weight:bold;font-size:12.200px;line-height:15px;color:#3c3c3c;letter-spacing:-0.090px;">joint1_to_base</div>
  <div class="inp" style="left:112px;top:50px;width:131.5px;height:24px;line-height:22px;text-align:right;padding:0 3.300px 0 0;font-weight:bold;font-size:12.400px">0.00</div>
  <div class="abs" style="left:24px;top:93px;width:219px;height:4px;border-radius:2px;background:linear-gradient(#d6d4d0,#e8e6e3);box-shadow:0 1px 0 rgba(255,255,255,.75)"></div>
  <div class="abs" style="left:24px;top:93px;width:108.1px;height:4px;border-radius:2px;background:linear-gradient(#e9683a,#f07a4a);box-shadow:0 0 0 0.400px #d65a2c"></div>
  <svg class="abs" style="left:126.1px;top:85px" width="14" height="22" viewBox="0 0 14 22"><defs><linearGradient id="sh0" x1="0" y1="0" x2="0" y2="1"><stop offset="0" stop-color="#ffffff"/><stop offset="1" stop-color="#dcdad7"/></linearGradient></defs><path d="M4.800 1.400 H9.200 Q12.700 1.400 12.700 4.900 V14.600 L7 20.600 L1.300 14.600 V4.900 Q1.300 1.400 4.800 1.400 Z" fill="url(#sh0)" stroke="#a8a39c" stroke-width="1"/><path d="M5 8.500 H9 M5 10.500 H9 M5 12.500 H9" stroke="#b9b6b1" stroke-width="0.800"/></svg>
  <div class="t" style="left:21px;top:122px;font-weight:bold;font-size:12.200px;line-height:15px;color:#3c3c3c;letter-spacing:-0.152px;">joint2_to_joint1</div>
  <div class="inp" style="left:116.5px;top:117px;width:127.0px;height:24px;line-height:22px;text-align:right;padding:0 3.300px 0 0;font-weight:bold;font-size:12.400px">-0.00</div>
  <div class="abs" style="left:24px;top:160px;width:219px;height:4px;border-radius:2px;background:linear-gradient(#d6d4d0,#e8e6e3);box-shadow:0 1px 0 rgba(255,255,255,.75)"></div>
  <svg class="abs" style="left:23.0px;top:152px" width="14" height="22" viewBox="0 0 14 22"><defs><linearGradient id="sh1" x1="0" y1="0" x2="0" y2="1"><stop offset="0" stop-color="#ffffff"/><stop offset="1" stop-color="#dcdad7"/></linearGradient></defs><path d="M4.800 1.400 H9.200 Q12.700 1.400 12.700 4.900 V14.600 L7 20.600 L1.300 14.600 V4.900 Q1.300 1.400 4.800 1.400 Z" fill="url(#sh1)" stroke="#a8a39c" stroke-width="1"/><path d="M5 8.500 H9 M5 10.500 H9 M5 12.500 H9" stroke="#b9b6b1" stroke-width="0.800"/></svg>
  <div class="t" style="left:21px;top:189px;font-weight:bold;font-size:12.200px;line-height:15px;color:#3c3c3c;letter-spacing:-0.152px;">joint3_to_joint2</div>
  <div class="inp" style="left:116.5px;top:184px;width:127.0px;height:24px;line-height:22px;text-align:right;padding:0 3.300px 0 0;font-weight:bold;font-size:12.400px">-0.00</div>
  <div class="abs" style="left:24px;top:227px;width:219px;height:4px;border-radius:2px;background:linear-gradient(#d6d4d0,#e8e6e3);box-shadow:0 1px 0 rgba(255,255,255,.75)"></div>
  <div class="abs" style="left:24px;top:227px;width:36.9px;height:4px;border-radius:2px;background:linear-gradient(#e9683a,#f07a4a);box-shadow:0 0 0 0.400px #d65a2c"></div>
  <svg class="abs" style="left:54.9px;top:219px" width="14" height="22" viewBox="0 0 14 22"><defs><linearGradient id="sh2" x1="0" y1="0" x2="0" y2="1"><stop offset="0" stop-color="#ffffff"/><stop offset="1" stop-color="#dcdad7"/></linearGradient></defs><path d="M4.800 1.400 H9.200 Q12.700 1.400 12.700 4.900 V14.600 L7 20.600 L1.300 14.600 V4.900 Q1.300 1.400 4.800 1.400 Z" fill="url(#sh2)" stroke="#a8a39c" stroke-width="1"/><path d="M5 8.500 H9 M5 10.500 H9 M5 12.500 H9" stroke="#b9b6b1" stroke-width="0.800"/></svg>
  <div class="t" style="left:21px;top:256px;font-weight:bold;font-size:12.200px;line-height:15px;color:#3c3c3c;letter-spacing:-0.152px;">joint4_to_joint3</div>
  <div class="inp" style="left:116.5px;top:251px;width:127.0px;height:24px;line-height:22px;text-align:right;padding:0 3.300px 0 0;font-weight:bold;font-size:12.400px">0.00</div>
  <div class="abs" style="left:24px;top:294px;width:219px;height:4px;border-radius:2px;background:linear-gradient(#d6d4d0,#e8e6e3);box-shadow:0 1px 0 rgba(255,255,255,.75)"></div>
  <svg class="abs" style="left:21.3px;top:286px" width="14" height="22" viewBox="0 0 14 22"><defs><linearGradient id="sh3" x1="0" y1="0" x2="0" y2="1"><stop offset="0" stop-color="#ffffff"/><stop offset="1" stop-color="#dcdad7"/></linearGradient></defs><path d="M4.800 1.400 H9.200 Q12.700 1.400 12.700 4.900 V14.600 L7 20.600 L1.300 14.600 V4.900 Q1.300 1.400 4.800 1.400 Z" fill="url(#sh3)" stroke="#a8a39c" stroke-width="1"/><path d="M5 8.500 H9 M5 10.500 H9 M5 12.500 H9" stroke="#b9b6b1" stroke-width="0.800"/></svg>
  <div class="t" style="left:21px;top:323px;font-weight:bold;font-size:12.200px;line-height:15px;color:#3c3c3c;letter-spacing:-0.152px;">joint5_to_joint4</div>
  <div class="inp" style="left:116.5px;top:318px;width:127.0px;height:24px;line-height:22px;text-align:right;padding:0 3.300px 0 0;font-weight:bold;font-size:12.400px">-0.00</div>
  <div class="abs" style="left:24px;top:361px;width:219px;height:4px;border-radius:2px;background:linear-gradient(#d6d4d0,#e8e6e3);box-shadow:0 1px 0 rgba(255,255,255,.75)"></div>
  <div class="abs" style="left:24px;top:361px;width:108.1px;height:4px;border-radius:2px;background:linear-gradient(#e9683a,#f07a4a);box-shadow:0 0 0 0.400px #d65a2c"></div>
  <svg class="abs" style="left:126.1px;top:353px" width="14" height="22" viewBox="0 0 14 22"><defs><linearGradient id="sh4" x1="0" y1="0" x2="0" y2="1"><stop offset="0" stop-color="#ffffff"/><stop offset="1" stop-color="#dcdad7"/></linearGradient></defs><path d="M4.800 1.400 H9.200 Q12.700 1.400 12.700 4.900 V14.600 L7 20.600 L1.300 14.600 V4.900 Q1.300 1.400 4.800 1.400 Z" fill="url(#sh4)" stroke="#a8a39c" stroke-width="1"/><path d="M5 8.500 H9 M5 10.500 H9 M5 12.500 H9" stroke="#b9b6b1" stroke-width="0.800"/></svg>
  <div class="btn" style="left:12px;top:395px;width:242px;height:25px;line-height:23px"><span style="letter-spacing:-0.029px;">Randomize</span></div>
  <div class="btn" style="left:12px;top:428px;width:242px;height:25px;line-height:23px"><span style="letter-spacing:0.193px;">Center</span></div>
  <div class="inp" style="left:12px;top:461px;width:242px;height:25px;line-height:23px;padding-left:6px">5</div>
  <div class="abs" style="left:237px;top:462px;width:16px;height:23px;border-left:1px solid #c9c5bf;border-radius:0 3px 3px 0;background:linear-gradient(#fdfdfd,#efeeec)"><svg class="abs" style="left:4px;top:4px" width="8" height="15" viewBox="0 0 8 15"><path d="M1.200 4.200 H6.800 L4 1 Z" fill="#9a9792"/><path d="M1.200 10.800 H6.800 L4 14 Z" fill="#9a9792"/></svg></div>
</div>
</body></html>
